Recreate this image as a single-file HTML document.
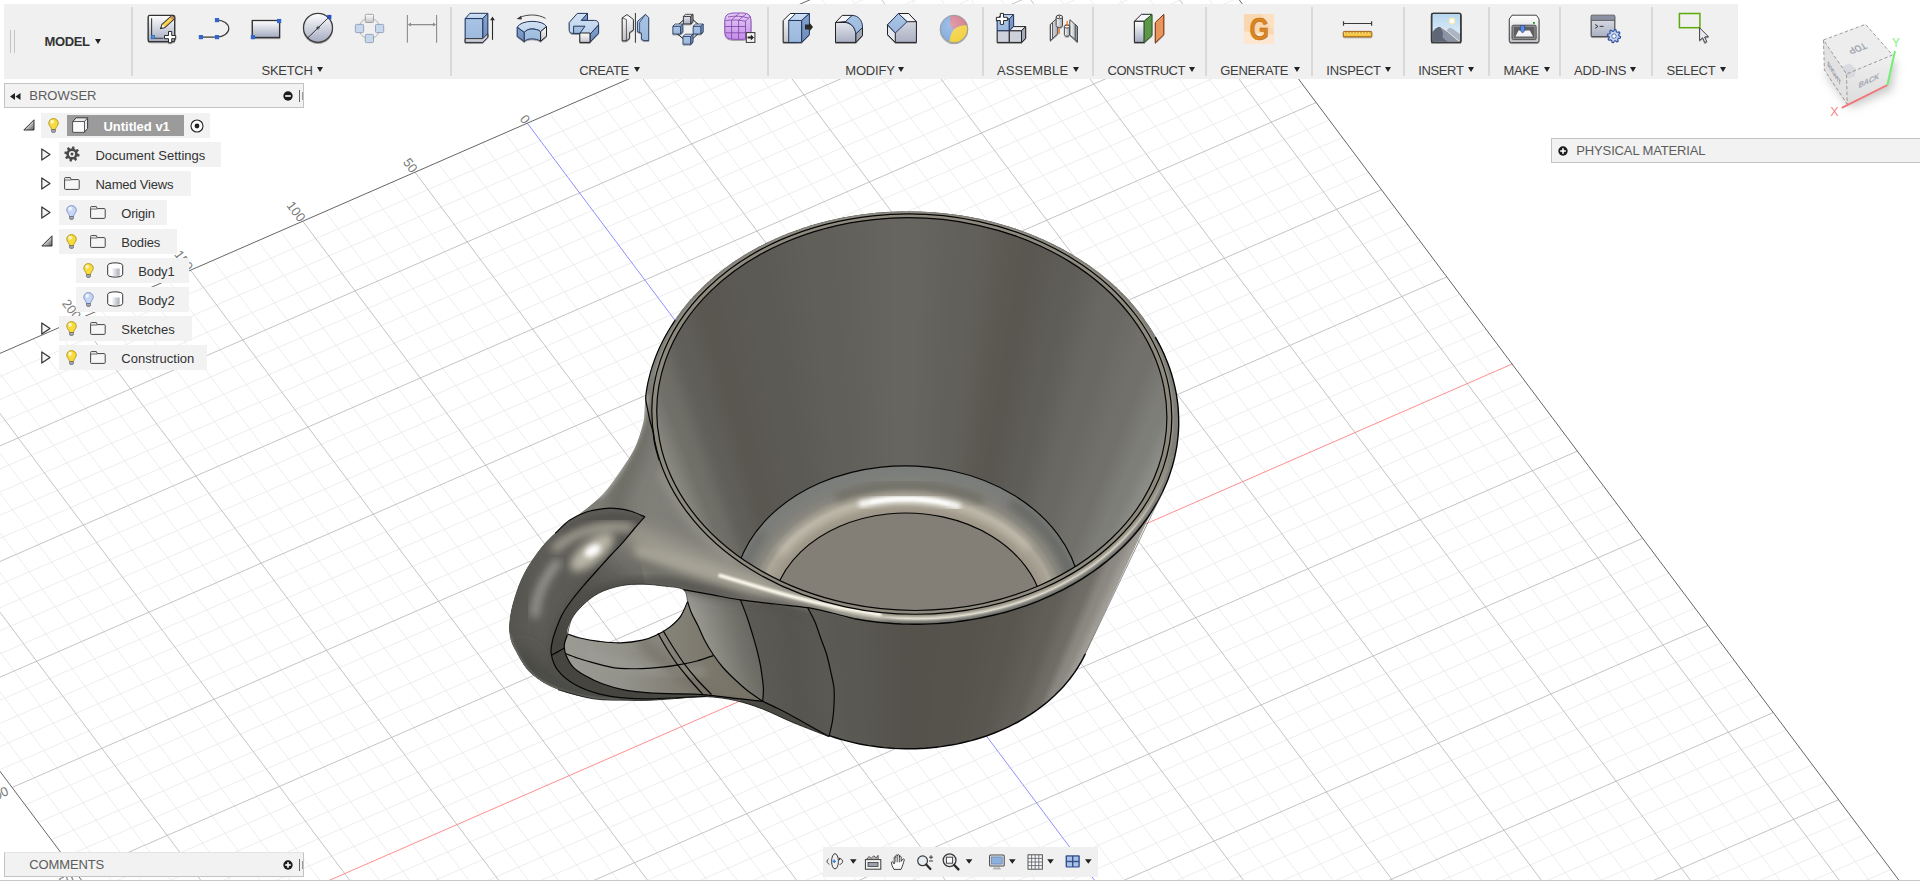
<!DOCTYPE html>
<html lang="en"><head><meta charset="utf-8"><title>Untitled v1 - Model</title>
<style>
html,body{margin:0;padding:0;background:#fff;}
body{width:1920px;height:881px;overflow:hidden;position:relative;font-family:"Liberation Sans",sans-serif;}
#scene{position:absolute;left:0;top:0;}

.tb{position:absolute;left:4px;top:4px;width:1734px;height:74.5px;background:#f0f0f0;}
.sep{position:absolute;top:3px;width:2px;height:69px;background:#d9d9d9;}
.lbl{position:absolute;top:58.9px;font-size:13px;line-height:15px;color:#3c3c3c;white-space:nowrap;}
.arr{position:absolute;width:0;height:0;border-left:3.4px solid transparent;border-right:3.4px solid transparent;border-top:5px solid #222;}
.ico{position:absolute;overflow:visible;}
.model{position:absolute;left:40.5px;top:29.7px;font-size:13px;font-weight:bold;line-height:16px;color:#333;letter-spacing:-0.35px;}
.grip{position:absolute;top:26px;width:1px;height:23px;background:#c4c4c4;}
.panel{position:absolute;background:#f2f2f2;border:1px solid #c3c3c3;box-sizing:border-box;font-size:13px;color:#5c5c5c;}
.panel span{position:absolute;line-height:16px;white-space:nowrap;}
.row{position:absolute;height:24.7px;background:#f2f2f2;}
.row span{position:absolute;font-size:13px;line-height:16px;color:#333;white-space:nowrap;top:5.7px;}
.nav{position:absolute;left:822.5px;top:846.7px;width:275.5px;height:30.3px;background:#f0f0f0;}
.botline{position:absolute;left:0;top:880px;width:1920px;height:1px;background:#c8c8c8;}

</style></head><body>
<svg id="scene" width="1920" height="881" viewBox="0 0 1920 881">
<defs>
<clipPath id="cpOuter"><path d="M657.3,474.3L654.9,468 652.8,461.7 651,455.4 649.4,449 648.1,442.6 647,436.1 646.2,429.7 645.7,423.2 645.4,416.7 645.4,410.3 645.7,403.8 646.2,397.3 647,390.9 648,384.5 649.4,378.1 650.9,371.7 652.8,365.4 654.9,359.2 657.2,353 659.9,346.9 662.7,340.8 665.8,334.8 669.2,328.9 672.8,323.1 676.6,317.4 680.7,311.7 685,306.2 689.5,300.8 694.3,295.5 699.3,290.4 704.5,285.3 709.8,280.4 715.4,275.6 721.2,271 727.2,266.5 733.4,262.1 739.7,257.9 746.2,253.9 752.9,250 759.7,246.3 766.7,242.8 773.8,239.4 781.1,236.3 788.5,233.3 796,230.4 803.7,227.8 811.4,225.3 819.3,223.1 827.2,221 835.2,219.2 843.3,217.5 851.5,216 859.7,214.7 868,213.7 876.3,212.8 884.7,212.1 893.1,211.7 901.5,211.4 909.9,211.4 918.3,211.5 926.7,211.9 935.1,212.4 943.5,213.2 951.8,214.2 960.1,215.3 968.4,216.7 976.6,218.3 984.7,220.1 992.8,222 1000.7,224.2 1008.6,226.5 1016.4,229.1 1024.1,231.8 1031.7,234.7 1039.1,237.8 1046.4,241.1 1053.6,244.5 1060.7,248.1 1067.6,251.9 1074.3,255.9 1080.9,260 1087.3,264.2 1093.6,268.7 1099.6,273.2 1105.5,277.9 1111.2,282.8 1116.7,287.8 1121.9,292.9 1127,298.1 1131.8,303.5 1136.5,308.9 1140.9,314.5 1145,320.2 1149,325.9 1152.7,331.8 1156.1,337.7 1159.4,343.8 1162.3,349.9 1165.1,356 1167.5,362.2 1169.7,368.5 1171.7,374.8 1173.4,381.2 1174.8,387.6 1176,394 1176.9,400.5 1177.5,407 1177.9,413.4 1178,419.9 1177.9,426.4 1177.5,432.9 1176.8,439.3 1175.8,445.7 1174.6,452.1 1173.1,458.5 1171.4,464.8 1169.4,471.1 1167.1,477.3 1164.6,483.5 1161.9,489.5 1085.1,654.2 1082.3,659.8 1079.1,665.4 1075.6,670.8 1071.8,676.1 1067.8,681.3 1063.4,686.4 1058.8,691.3 1054,696.1 1048.8,700.7 1043.5,705.1 1037.8,709.4 1032,713.4 1025.9,717.3 1019.7,721 1013.2,724.4 1006.6,727.7 999.8,730.7 992.8,733.5 985.7,736.1 978.4,738.5 971,740.6 963.5,742.5 955.9,744.1 948.2,745.5 940.4,746.7 932.6,747.6 924.7,748.2 916.8,748.6 908.9,748.8 901,748.6 893,748.3 885.1,747.7 877.3,746.8 869.5,745.7 861.7,744.3 854,742.7 846.5,740.8 839,738.7 831.6,736.4 824.4,733.8 817.2,731 810.3,728 803.5,724.8 796.9,721.3 790.5,717.7 784.3,713.8 778.2,709.8 772.4,705.6 766.9,701.1 761.6,696.6 756.5,691.8 751.7,686.9 747.1,681.9 742.8,676.7 738.8,671.4 735.1,665.9 731.7,660.4 728.6,654.7 725.8,649 723.2,643.2Z"/></clipPath>
<clipPath id="cpIn"><path d="M1132.3,317.8L1138.7,326.9 1144.5,336.2 1149.7,345.8 1154.2,355.5 1158,365.4 1161.2,375.4 1163.6,385.6 1165.4,395.8 1166.5,406 1166.9,416.3 1166.6,426.6 1165.6,436.9 1163.9,447 1161.5,457.1 1158.4,467.1 1154.7,476.9 1150.3,486.6 1145.2,496 1139.5,505.3 1133.1,514.2 1126.2,523 1118.7,531.4 1110.6,539.5 1101.9,547.2 1092.8,554.6 1083.1,561.6 1073,568.2 1062.4,574.3 1051.4,580.1 1040,585.3 1028.3,590.1 1016.3,594.5 1004,598.3 991.4,601.6 978.6,604.4 965.6,606.7 952.5,608.5 939.2,609.7 925.9,610.4 912.6,610.5 899.2,610.1 885.9,609.2 872.6,607.8 859.5,605.8 846.5,603.3 833.7,600.2 821.1,596.7 808.7,592.6 796.6,588.1 784.9,583.1 773.5,577.6 762.4,571.7 751.8,565.3 741.6,558.6 731.9,551.4 722.7,543.9 714,536 705.8,527.8 698.2,519.2 691.2,510.4 684.8,501.3 679,492 673.8,482.4 669.3,472.7 665.5,462.8 662.3,452.8 659.9,442.6 658.1,432.4 657,422.2 656.6,411.9 656.9,401.6 657.9,391.3 659.6,381.2 662,371.1 665.1,361.1 668.8,351.3 673.2,341.6 678.3,332.2 684,322.9 690.4,314 697.3,305.2 704.8,296.8 712.9,288.7 721.6,281 730.7,273.6 740.4,266.6 750.5,260 761.1,253.9 772.1,248.1 783.5,242.9 795.2,238.1 807.2,233.7 819.5,229.9 832.1,226.6 844.9,223.8 857.9,221.5 871,219.7 884.3,218.5 897.6,217.8 910.9,217.7 924.3,218.1 937.6,219 950.9,220.4 964,222.4 977,224.9 989.8,228 1002.4,231.5 1014.8,235.6 1026.9,240.1 1038.6,245.1 1050,250.6 1061.1,256.5 1071.7,262.9 1081.9,269.6 1091.6,276.8 1100.8,284.3 1109.5,292.2 1117.7,300.4 1125.3,309 1132.3,317.8Z"/></clipPath>
<clipPath id="cpE2"><path d="M1136.5,316L1143,325.3 1148.9,334.8 1154.2,344.5 1158.7,354.4 1162.6,364.5 1165.9,374.7 1168.4,385 1170.2,395.4 1171.3,405.9 1171.7,416.4 1171.4,426.8 1170.4,437.3 1168.7,447.7 1166.2,457.9 1163.1,468.1 1159.3,478.1 1154.8,487.9 1149.6,497.6 1143.8,507 1137.3,516.1 1130.2,525 1122.6,533.6 1114.3,541.8 1105.5,549.7 1096.2,557.2 1086.3,564.3 1076,571.1 1065.2,577.3 1054,583.2 1042.5,588.6 1030.5,593.4 1018.3,597.9 1005.7,601.7 992.9,605.1 979.8,608 966.6,610.3 953.2,612.1 939.8,613.4 926.2,614.1 912.6,614.2 899,613.8 885.4,612.9 871.9,611.4 858.5,609.4 845.3,606.8 832.2,603.7 819.4,600.1 806.8,596 794.5,591.4 782.5,586.3 770.9,580.7 759.6,574.7 748.8,568.2 738.4,561.3 728.5,554 719.1,546.3 710.2,538.3 701.9,529.9 694.2,521.2 687,512.2 680.5,502.9 674.6,493.4 669.3,483.7 664.8,473.8 660.9,463.7 657.6,453.5 655.1,443.2 653.3,432.8 652.2,422.3 651.8,411.8 652.1,401.4 653.1,390.9 654.8,380.5 657.3,370.3 660.4,360.1 664.2,350.1 668.7,340.3 673.9,330.6 679.7,321.2 686.2,312.1 693.3,303.2 700.9,294.6 709.2,286.4 718,278.5 727.3,271 737.2,263.9 747.5,257.1 758.3,250.9 769.5,245 781,239.6 793,234.8 805.2,230.3 817.8,226.5 830.6,223.1 843.7,220.2 856.9,217.9 870.3,216.1 883.7,214.8 897.3,214.1 910.9,214 924.5,214.4 938.1,215.3 951.6,216.8 965,218.8 978.2,221.4 991.3,224.5 1004.1,228.1 1016.7,232.2 1029,236.8 1041,241.9 1052.6,247.5 1063.9,253.5 1074.7,260 1085.1,266.9 1095,274.2 1104.4,281.9 1113.3,289.9 1121.6,298.3 1129.3,307 1136.5,316Z"/></clipPath>
<clipPath id="cpF1"><path d="M1057.7,534.1L1062,540.3 1066,546.7 1069.5,553.2 1072.6,559.9 1075.2,566.6 1077.3,573.4 1079,580.3 1080.2,587.3 1081,594.3 1081.3,601.3 1081,608.3 1080.4,615.3 1079.2,622.3 1077.6,629.1 1075.5,635.9 1072.9,642.6 1069.9,649.2 1066.4,655.7 1062.5,662 1058.2,668.1 1053.5,674 1048.4,679.8 1042.8,685.3 1036.9,690.6 1030.7,695.6 1024.1,700.4 1017.2,704.9 1010,709.1 1002.5,713 994.7,716.6 986.7,719.8 978.5,722.8 970.1,725.4 961.6,727.7 952.8,729.6 944,731.1 935,732.3 926,733.2 916.9,733.6 907.8,733.8 898.7,733.5 889.6,732.9 880.6,731.9 871.6,730.5 862.8,728.8 854,726.7 845.4,724.3 837,721.6 828.8,718.5 820.7,715 812.9,711.3 805.4,707.3 798.2,702.9 791.2,698.3 784.6,693.4 778.3,688.3 772.4,682.9 766.8,677.3 761.6,671.5 756.8,665.5 752.5,659.3 748.5,652.9 745,646.4 741.9,639.7 739.3,633 737.2,626.2 735.5,619.3 734.3,612.3 733.5,605.3 733.2,598.3 733.5,591.3 734.1,584.3 735.3,577.3 736.9,570.5 739,563.7 741.6,557 744.6,550.4 748.1,543.9 752,537.6 756.3,531.5 761,525.6 766.1,519.8 771.7,514.3 777.6,509 783.8,504 790.4,499.2 797.3,494.7 804.5,490.5 812,486.6 819.8,483 827.8,479.8 836,476.8 844.4,474.2 852.9,471.9 861.7,470 870.5,468.5 879.5,467.3 888.5,466.4 897.6,466 906.7,465.8 915.8,466.1 924.9,466.7 933.9,467.7 942.9,469.1 951.7,470.8 960.5,472.9 969.1,475.3 977.5,478 985.7,481.1 993.8,484.6 1001.6,488.3 1009.1,492.3 1016.3,496.7 1023.3,501.3 1029.9,506.2 1036.2,511.3 1042.1,516.7 1047.7,522.3 1052.9,528.1 1057.7,534.1Z"/></clipPath>
<filter id="b1" x="-30%" y="-30%" width="160%" height="160%"><feGaussianBlur stdDeviation="1.2"/></filter>
<filter id="b2" x="-30%" y="-30%" width="160%" height="160%"><feGaussianBlur stdDeviation="2.5"/></filter>
<filter id="b4" x="-30%" y="-30%" width="160%" height="160%"><feGaussianBlur stdDeviation="4.5"/></filter>
<filter id="b8" x="-40%" y="-40%" width="180%" height="180%"><feGaussianBlur stdDeviation="9"/></filter>
<filter id="b14" x="-50%" y="-50%" width="200%" height="200%"><feGaussianBlur stdDeviation="15"/></filter>
<linearGradient id="gFloor" gradientUnits="userSpaceOnUse" x1="780" y1="520" x2="1040" y2="620"><stop offset="0" stop-color="#837f76"/><stop offset="0.5" stop-color="#827e75"/><stop offset="1" stop-color="#807c73"/></linearGradient>
<linearGradient id="gMF" gradientUnits="userSpaceOnUse" x1="0" y1="450" x2="0" y2="545"><stop offset="0" stop-color="#000"/><stop offset="1" stop-color="#fff"/></linearGradient>
<mask id="mFront" maskUnits="userSpaceOnUse" x="600" y="200" width="650" height="450"><rect x="600" y="200" width="650" height="450" fill="url(#gMF)"/></mask>
<linearGradient id="gStreak" gradientUnits="userSpaceOnUse" x1="760" y1="0" x2="1110" y2="0"><stop offset="0" stop-color="#f6f2e2" stop-opacity="0.95"/><stop offset="0.35" stop-color="#f2eee0" stop-opacity="0.6"/><stop offset="0.7" stop-color="#eeeade" stop-opacity="0.3"/><stop offset="1" stop-color="#eeeade" stop-opacity="0"/></linearGradient>
<clipPath id="cpH"><path clip-rule="evenodd" d="M651.5,372C650.8,373.8 648.4,379.8 647.5,383C646.6,386.2 646.5,387.4 646.1,391.4C645.7,395.4 645.7,401.8 645.2,407C644.7,412.2 645,415.8 643.3,422.6C641.6,429.5 638.6,440.1 634.8,448.1C631,456.1 625.8,463.2 620.6,470.8C615.4,478.4 609.6,486.9 603.5,493.5C597.4,500.1 590.8,504.9 583.7,510.6C576.6,516.3 568.1,521.5 561,527.6C553.9,533.8 547.2,539.9 541.1,547.5C535,555.1 528.6,564.5 524.1,573C519.6,581.5 516.5,590.8 514.1,598.6C511.7,606.4 510.2,613.9 509.5,620C508.8,626.1 508.8,630.2 509.6,635C510.4,639.8 511,642.5 514.5,648.9C518,655.3 523.5,666.6 530.8,673.4C538.1,680.2 547.6,685.6 558.1,689.8C568.6,694 582.1,697.1 593.5,698.8C604.9,700.5 616.8,700 626.2,700.2C635.6,700.4 641.9,700.5 650,700.2C658.1,699.9 665.3,699.2 674.6,698.6C683.9,698 695.9,696.3 706,696.6C716.1,696.9 726,698.4 735.4,700.5C744.8,702.6 753,705.3 762.6,709C772.2,712.7 782.1,718 793.2,722.6C804.3,727.2 823,734.3 829,736.6L829,736.6C829.6,733.8 831.8,725.7 832.6,720C833.5,714.3 833.9,707.5 834.1,702.2C834.3,696.9 834.6,693.1 834,688C833.4,682.9 832,677.2 830.7,671.5C829.5,665.8 828.2,659.7 826.5,654C824.8,648.3 822.4,642.8 820.5,637.5C818.6,632.2 817.1,627 815,622C812.9,617 808.9,610.1 807.7,607.7L832,613 854.6,618.9 L861.3,620.8 871.7,622.3 882.1,623.4 892.6,624.3 903.1,624.8 913.6,625 924.2,624.9 934.7,624.5 945.1,623.8 955.6,622.7 965.9,621.3 976.2,619.7 986.3,617.7L930,600 L860,590 L812,575 L770,550 L730,515 L700,470 L678,425 L664,385Z M567.6,634C566.2,630.8 569.2,623.8 571.7,619C574.2,614.2 578.1,609.7 582.6,605.4C587.1,601.1 592.5,596.4 598.9,593.1C605.2,589.8 613.4,587.3 620.7,585.8C628,584.3 635.2,584.2 642.5,584.2C649.8,584.2 657.5,585.2 664.3,586.1C671.1,587 679.5,587 683.4,589.6C687.3,592.2 688.1,597 687.6,601.5C687.1,606 683.6,612 680.6,616.3C677.6,620.6 673.8,623.9 669.7,627.1C665.6,630.3 660.6,633.1 656.1,635.3C651.6,637.5 648.4,638.9 642.5,640.2C636.6,641.5 628,642.7 620.7,642.9C613.4,643.1 605.7,642.1 598.9,641.3C592.1,640.5 585.1,639.2 579.9,638C574.7,636.8 569,637.2 567.6,634Z"/></clipPath>
<clipPath id="cpRA"><path d="M555.3,533.3C557.7,531.1 564.3,523.8 569.5,520.2C574.7,516.7 580.8,513.9 586.5,512C592.2,510.1 598.3,509.2 603.5,508.6C608.7,508 613,508.1 617.7,508.6C622.5,509.1 627.5,510.1 632,511.5C636.5,512.9 642.6,515.9 644.7,516.8L644.7,516.8C642.9,518.8 637.5,524.8 634,529C630.5,533.2 627.2,537.5 623.4,541.8C619.6,546.1 615.2,550.5 611,555C606.8,559.5 602.7,564.2 598.4,569C594.1,573.8 589.2,579.1 585,584C580.8,588.9 576.8,593.5 573,598.5C569.2,603.5 565.2,609.1 562.5,614C559.8,618.9 558.2,623.5 556.5,628C554.8,632.5 553.3,636.6 552.4,641C551.5,645.4 550.3,649.4 551.3,654.4C552.2,659.4 554.2,665.7 558.1,670.7C562,675.7 567.6,680.4 574.4,684.3C581.2,688.2 590.3,691.6 598.9,693.9C607.5,696.2 617.7,697.4 626.2,698.2C634.7,699 641,698.9 650,698.8C659,698.7 670.7,698 680,697.6C689.3,697.2 701.7,696.6 706,696.4L706,696.6C700.8,696.9 683.9,698 674.6,698.6C665.3,699.2 658.1,699.9 650,700.2C641.9,700.5 635.6,700.4 626.2,700.2C616.8,700 604.9,700.5 593.5,698.8C582.1,697.1 568.6,694 558.1,689.8C547.6,685.6 538.1,680.2 530.8,673.4C523.5,666.6 518,655.3 514.5,648.9C511,642.5 510.4,639.8 509.6,635C508.8,630.2 508.8,626.1 509.5,620C510.2,613.9 511.7,606.4 514.1,598.6C516.5,590.8 519.6,581.5 524.1,573C528.6,564.5 535,555.1 541.1,547.5C547.2,539.9 557.7,530.9 561,527.6Z"/></clipPath>
<clipPath id="cpRC"><path d="M567.6,634C569.6,634.7 574.7,636.8 579.9,638C585.1,639.2 592.1,640.5 598.9,641.3C605.7,642.1 613.4,643.1 620.7,642.9C628,642.7 636.6,641.5 642.5,640.2C648.4,638.9 651.6,637.5 656.1,635.3C660.6,633.1 665.6,630.3 669.7,627.1C673.8,623.9 677.6,620.6 680.6,616.3C683.6,612 686.4,604 687.6,601.5L687.6,601.5C688.2,603.4 689.8,609 691.5,613C693.2,617 695.7,621 697.9,625.5C700.1,630 702,635.2 704.5,640C707,644.8 710.1,649.9 713.2,654.5C716.3,659.1 719.3,663.2 723,667.5C726.7,671.8 731.2,676.1 735.4,680C739.6,683.9 743.5,687.5 748,691C752.5,694.5 760.2,699.6 762.6,701.3L762.6,701.3C758,700.8 745.1,699.4 735,698.3C724.9,697.2 712.1,695.4 702,694.6C691.9,693.9 682.7,694 674.6,693.8C666.5,693.6 661.8,693.8 653.5,693.2C645.2,692.6 633.6,691.8 625.1,690.2C616.6,688.6 609,686.2 602.4,683.8C595.8,681.4 590.3,678.6 585.4,675.8C580.5,673 576.1,670.2 572.9,666.8C569.7,663.4 567.5,658.5 566.1,655.4C564.7,652.3 564.6,650.1 564.4,648C564.1,645.9 564.1,645.2 564.6,643C565.1,640.8 566.9,636.3 567.4,635Z"/></clipPath>
<clipPath id="cpRE"><path d="M687.6,601.5C688.2,603.4 689.8,609 691.5,613C693.2,617 695.7,621 697.9,625.5C700.1,630 702,635.2 704.5,640C707,644.8 710.1,649.9 713.2,654.5C716.3,659.1 719.3,663.2 723,667.5C726.7,671.8 731.2,676.1 735.4,680C739.6,683.9 743.5,687.5 748,691C752.5,694.5 760.2,699.6 762.6,701.3L762.6,701.3C762.7,699.2 763.7,694 763.4,688.5C763.1,683 761.9,674.4 760.9,668.1C759.9,661.9 758.6,656.7 757.2,651C755.8,645.3 754.1,639.7 752.4,634C750.7,628.3 749,622.7 747,617C745,611.3 741.6,602.8 740.5,599.9L740.5,599.9C735.4,599 719.5,596.1 710,594.4C700.5,592.7 687.8,590.4 683.4,589.6Z"/></clipPath>
<clipPath id="cpRF"><path d="M740.5,599.9C741.6,602.8 745,611.3 747,617C749,622.7 750.7,628.3 752.4,634C754.1,639.7 755.8,645.3 757.2,651C758.6,656.7 759.9,661.9 760.9,668.1C761.9,674.4 763.1,683 763.4,688.5C763.7,694 762.7,699.2 762.6,701.3L762.6,701.3C765.2,702.5 772.9,706 778,708.5C783.1,711 787.7,713.5 793.2,716.5C798.7,719.5 805,723.1 811,726.5C817,729.9 826,734.9 829,736.6L829,736.6C829.6,733.8 831.8,725.7 832.6,720C833.5,714.3 833.9,707.5 834.1,702.2C834.3,696.9 834.6,693.1 834,688C833.4,682.9 832,677.2 830.7,671.5C829.5,665.8 828.2,659.7 826.5,654C824.8,648.3 822.4,642.8 820.5,637.5C818.6,632.2 817.1,627 815,622C812.9,617 808.9,610.1 807.7,607.7L807.7,607.7C802.2,607.1 786.2,605.3 775,604C763.8,602.7 746.2,600.6 740.5,599.9Z"/></clipPath>
<linearGradient id="gRE" gradientUnits="userSpaceOnUse" x1="692" y1="640" x2="762" y2="620"><stop offset="0" stop-color="#a3a29b"/><stop offset="0.25" stop-color="#8e8d86"/><stop offset="0.6" stop-color="#74736c"/><stop offset="1" stop-color="#605e58"/></linearGradient>
<linearGradient id="gRF" gradientUnits="userSpaceOnUse" x1="750" y1="650" x2="835" y2="640"><stop offset="0" stop-color="#5d5b55"/><stop offset="0.5" stop-color="#575550"/><stop offset="1" stop-color="#5b5a54"/></linearGradient>
<linearGradient id="gRC" gradientUnits="userSpaceOnUse" x1="570" y1="660" x2="740" y2="660"><stop offset="0" stop-color="#9a9a93"/><stop offset="0.3" stop-color="#94938b"/><stop offset="0.55" stop-color="#86847a"/><stop offset="0.8" stop-color="#7c786c"/><stop offset="1" stop-color="#777367"/></linearGradient>
<linearGradient id="gBody" gradientUnits="userSpaceOnUse" x1="790" y1="0" x2="905" y2="0"><stop offset="0" stop-color="#807f78"/><stop offset="1" stop-color="#807f78" stop-opacity="0"/></linearGradient>
<linearGradient id="gBand" gradientUnits="userSpaceOnUse" x1="632" y1="540" x2="560" y2="640"><stop offset="0" stop-color="#6a6963" stop-opacity="0"/><stop offset="0.3" stop-color="#5c5b55" stop-opacity="0.85"/><stop offset="0.6" stop-color="#504f4a"/><stop offset="1" stop-color="#464540"/></linearGradient>
</defs>
<g id="grid" fill="none" stroke-width="0.85">
<path stroke="#eaeaea" d="M-213.6,446.6L844.1,1858.2M-191.1,436.8L866.6,1848.4M-168.7,427L889,1838.6M-123.8,407.4L933.9,1819M-101.3,397.6L956.4,1809.2M-78.9,387.8L978.8,1799.4M-56.4,378L1001.3,1789.6M-11.5,358.4L1046.2,1770M10.9,348.6L1068.6,1760.2M33.4,338.8L1091.1,1750.4M55.8,329L1113.5,1740.6M100.7,309.4L1158.4,1721M123.2,299.6L1180.9,1711.2M145.6,289.8L1203.3,1701.4M168.1,280L1225.8,1691.6M213,260.4L1270.7,1672M235.4,250.6L1293.1,1662.2M257.9,240.8L1315.6,1652.4M280.3,231L1338,1642.6M325.2,211.4L1382.9,1623M347.7,201.6L1405.4,1613.2M370.1,191.8L1427.8,1603.4M392.6,182L1450.3,1593.6M437.5,162.4L1495.2,1574M459.9,152.6L1517.6,1564.2M482.4,142.8L1540.1,1554.4M504.8,133L1562.5,1544.6M549.7,113.4L1607.4,1525M572.2,103.6L1629.9,1515.2M594.6,93.8L1652.3,1505.4M617.1,84L1674.8,1495.6M662,64.4L1719.7,1476M684.4,54.6L1742.1,1466.2M706.9,44.8L1764.6,1456.4M729.3,35L1787,1446.6M774.2,15.4L1831.9,1427M796.7,5.6L1854.4,1417.2M819.1,-4.2L1876.8,1407.4M841.6,-14L1899.3,1397.6M886.5,-33.6L1944.2,1378M908.9,-43.4L1966.6,1368.2M931.4,-53.2L1989.1,1358.4M953.8,-63L2011.5,1348.6M998.7,-82.6L2056.4,1329M1021.2,-92.4L2078.9,1319.2M1043.6,-102.2L2101.3,1309.4M1066.1,-112L2123.8,1299.6M1111,-131.6L2168.7,1280M-223,473.8L1146.5,-124M-209.9,491.2L1159.5,-106.5M-196.8,508.7L1172.6,-89.1M-170.7,543.5L1198.7,-54.3M-157.7,560.9L1211.8,-36.8M-144.6,578.4L1224.8,-19.4M-131.6,595.8L1237.9,-2M-105.4,630.6L1264,32.9M-92.4,648.1L1277.1,50.3M-79.3,665.5L1290.1,67.7M-66.3,682.9L1303.2,85.2M-40.2,717.8L1329.3,120M-27.1,735.2L1342.4,137.4M-14,752.6L1355.4,154.9M-1,770.1L1368.5,172.3M25.1,804.9L1394.6,207.2M38.2,822.4L1407.6,224.6M51.3,839.8L1420.7,242M64.3,857.2L1433.8,259.4M90.4,892.1L1459.9,294.3M103.5,909.5L1472.9,311.7M116.5,926.9L1486,329.1M129.6,944.3L1499.1,346.6M155.7,979.2L1525.2,381.4M168.8,996.6L1538.2,398.9M181.8,1014.1L1551.3,416.3M194.9,1031.5L1564.3,433.7M221,1066.3L1590.5,468.6M234.1,1083.8L1603.5,486M247.1,1101.2L1616.6,503.4M260.2,1118.6L1629.6,520.9M286.3,1153.5L1655.7,555.7M299.4,1170.9L1668.8,573.1M312.4,1188.3L1681.9,590.6M325.5,1205.8L1694.9,608M351.6,1240.6L1721,642.8M364.6,1258L1734.1,660.3M377.7,1275.5L1747.2,677.7M390.8,1292.9L1760.2,695.1M416.9,1327.8L1786.3,730M429.9,1345.2L1799.4,747.4M443,1362.6L1812.4,764.8M456.1,1380L1825.5,782.3M482.2,1414.9L1851.6,817.1M495.2,1432.3L1864.7,834.6M508.3,1449.8L1877.7,852M521.3,1467.2L1890.8,869.4M547.5,1502L1916.9,904.3M560.5,1519.5L1930,921.7M573.6,1536.9L1943,939.1M586.6,1554.3L1956.1,956.5M612.7,1589.2L1982.2,991.4M625.8,1606.6L1995.3,1008.8M638.9,1624L2008.3,1026.3M651.9,1641.5L2021.4,1043.7M678,1676.3L2047.5,1078.5M691.1,1693.7L2060.5,1096M704.2,1711.2L2073.6,1113.4M717.2,1728.6L2086.7,1130.8M743.3,1763.5L2112.8,1165.7M756.4,1780.9L2125.8,1183.1M769.4,1798.3L2138.9,1200.5M782.5,1815.7L2152,1218M808.6,1850.6L2178.1,1252.8M821.7,1868L2191.1,1270.2"/>
<path stroke="#b9b9b9" d="M-146.2,417.2L911.5,1828.8M-34,368.2L1023.7,1779.8M78.3,319.2L1136,1730.8M190.5,270.2L1248.2,1681.8M302.8,221.2L1360.5,1632.8M415,172.2L1472.7,1583.8M639.5,74.2L1697.2,1485.8M751.8,25.2L1809.5,1436.8M864,-23.8L1921.7,1387.8M976.3,-72.8L2034,1338.8M1088.5,-121.8L2146.2,1289.8M-183.8,526.1L1185.7,-71.7M-118.5,613.2L1251,15.4M-53.2,700.4L1316.2,102.6M12.1,787.5L1381.5,189.7M77.4,874.6L1446.8,276.9M207.9,1048.9L1577.4,451.1M273.2,1136.1L1642.7,538.3M338.5,1223.2L1708,625.4M403.8,1310.3L1773.3,712.6M469.1,1397.5L1838.6,799.7M534.4,1484.6L1903.9,886.8M599.7,1571.7L1969.1,974M665,1658.9L2034.4,1061.1M730.3,1746L2099.7,1148.3M795.6,1833.2L2165,1235.4"/>
<path stroke="#ff7a7a" d="M142.7,961.8L1512.1,364"/>
<path stroke="#7a7aff" d="M527.3,123.2L1585,1534.8"/>
<path stroke="#4a4a4a" d="M821.7,1868L-236,456.4L1133.4,-141.4L2191.1,1270.2"/>
</g>
<g font-family="Liberation Sans, sans-serif" font-size="13" fill="#7a7a7a">
<text transform="translate(527.3,123.2) rotate(53.2)" text-anchor="end" x="-1" y="4">0</text>
<text transform="translate(415,172.2) rotate(53.2)" text-anchor="end" x="-1" y="4">50</text>
<text transform="translate(302.8,221.2) rotate(53.2)" text-anchor="end" x="-1" y="4">100</text>
<text transform="translate(190.5,270.2) rotate(53.2)" text-anchor="end" x="-1" y="4">150</text>
<text transform="translate(78.3,319.2) rotate(53.2)" text-anchor="end" x="-1" y="4">200</text>
<text transform="translate(12.1,795.5) rotate(-23.6)" text-anchor="end" x="-2" y="-2">100</text>
<text transform="translate(77.4,882.6) rotate(-23.6)" text-anchor="end" x="-2" y="-2">50</text>
<text transform="translate(142.7,969.8) rotate(-23.6)" text-anchor="end" x="-2" y="-2">0</text>
<text transform="translate(207.9,1056.9) rotate(-23.6)" text-anchor="end" x="-2" y="-2">50</text>
<text transform="translate(273.2,1144.1) rotate(-23.6)" text-anchor="end" x="-2" y="-2">100</text>
</g>
<g id="cup">
<g clip-path="url(#cpOuter)" shape-rendering="crispEdges">
<path fill="#706f69" d="M751.1,854.1L387.6,315.2 391.4,312.7 752.1,853.4Z"/><path fill="#706f69" d="M752,853.5L390.9,313 394.6,310.5 753,852.8Z"/><path fill="#706f69" d="M752.9,852.9L394.1,310.8 397.9,308.3 754,852.2Z"/><path fill="#706f69" d="M753.8,852.3L397.4,308.7 401.2,306.2 754.9,851.6Z"/><path fill="#706f69" d="M754.7,851.7L400.7,306.5 404.5,304.1 755.8,851Z"/><path fill="#706f69" d="M755.6,851.1L404,304.4 407.8,302 756.7,850.4Z"/><path fill="#706f69" d="M756.6,850.5L407.3,302.3 411.1,299.9 757.6,849.8Z"/><path fill="#706f69" d="M757.5,849.9L410.6,300.2 414.5,297.8 758.5,849.2Z"/><path fill="#706f69" d="M758.4,849.3L414,298.1 417.8,295.7 759.5,848.7Z"/><path fill="#706f69" d="M759.3,848.7L417.3,296 421.1,293.6 760.4,848.1Z"/><path fill="#706f69" d="M760.3,848.2L420.6,293.9 424.5,291.6 761.3,847.5Z"/><path fill="#706f69" d="M761.2,847.6L424,291.9 427.9,289.6 762.3,846.9Z"/><path fill="#706f69" d="M762.1,847L427.4,289.9 431.2,287.6 763.2,846.4Z"/><path fill="#706f69" d="M763.1,846.5L430.7,287.9 434.6,285.6 764.1,845.8Z"/><path fill="#706f69" d="M764,845.9L434.1,285.9 438,283.6 765.1,845.3Z"/><path fill="#706f69" d="M764.9,845.4L437.5,283.9 441.4,281.6 766,844.7Z"/><path fill="#706f69" d="M765.9,844.8L440.9,281.9 444.8,279.7 767,844.2Z"/><path fill="#706f69" d="M766.8,844.3L444.3,279.9 448.2,277.7 767.9,843.7Z"/><path fill="#706f69" d="M767.8,843.7L447.7,278 451.6,275.8 768.9,843.1Z"/><path fill="#706f69" d="M768.7,843.2L451.1,276.1 455.1,273.9 769.8,842.6Z"/><path fill="#706f69" d="M769.7,842.7L454.6,274.2 458.5,272 770.8,842.1Z"/><path fill="#6f6e68" d="M770.6,842.1L458,272.3 462,270.1 771.7,841.5Z"/><path fill="#6f6e68" d="M771.6,841.6L461.4,270.4 465.4,268.2 772.7,841Z"/><path fill="#6f6e68" d="M772.6,841.1L464.9,268.5 468.9,266.4 773.7,840.5Z"/><path fill="#6f6e68" d="M773.5,840.6L468.4,266.7 472.4,264.6 774.6,840Z"/><path fill="#6e6d67" d="M774.5,840.1L471.8,264.8 475.8,262.7 775.6,839.5Z"/><path fill="#6e6d67" d="M775.5,839.6L475.3,263 479.3,260.9 776.6,839Z"/><path fill="#6e6d67" d="M776.4,839.1L478.8,261.2 482.8,259.2 777.5,838.5Z"/><path fill="#6d6c66" d="M777.4,838.6L482.3,259.4 486.3,257.4 778.5,838Z"/><path fill="#6d6c66" d="M778.4,838.1L485.8,257.6 489.8,255.6 779.5,837.5Z"/><path fill="#6d6c66" d="M779.3,837.6L489.3,255.9 493.4,253.9 780.5,837Z"/><path fill="#6c6b65" d="M780.3,837.1L492.8,254.1 496.9,252.2 781.4,836.6Z"/><path fill="#6c6b65" d="M781.3,836.6L496.4,252.4 500.4,250.4 782.4,836.1Z"/><path fill="#6b6a64" d="M782.3,836.2L499.9,250.7 504,248.7 783.4,835.6Z"/><path fill="#6b6a64" d="M783.3,835.7L503.4,249 507.5,247.1 784.4,835.1Z"/><path fill="#6b6a64" d="M784.2,835.2L507,247.3 511.1,245.4 785.4,834.7Z"/><path fill="#6a6963" d="M785.2,834.7L510.5,245.6 514.6,243.7 786.4,834.2Z"/><path fill="#6a6963" d="M786.2,834.3L514.1,244 518.2,242.1 787.4,833.8Z"/><path fill="#6a6963" d="M787.2,833.8L517.7,242.4 521.8,240.5 788.4,833.3Z"/><path fill="#696862" d="M788.2,833.4L521.2,240.7 525.4,238.9 789.4,832.9Z"/><path fill="#696862" d="M789.2,832.9L524.8,239.1 529,237.3 790.4,832.4Z"/><path fill="#696862" d="M790.2,832.5L528.4,237.5 532.6,235.7 791.4,832Z"/><path fill="#696862" d="M791.2,832.1L532,236 536.2,234.2 792.4,831.6Z"/><path fill="#686761" d="M792.2,831.6L535.6,234.4 539.8,232.6 793.4,831.1Z"/><path fill="#686761" d="M793.2,831.2L539.2,232.9 543.4,231.1 794.4,830.7Z"/><path fill="#686761" d="M794.2,830.8L542.8,231.3 547,229.6 795.4,830.3Z"/><path fill="#686761" d="M795.2,830.4L546.5,229.8 550.7,228.1 796.4,829.9Z"/><path fill="#686761" d="M796.2,829.9L550.1,228.3 554.3,226.6 797.4,829.5Z"/><path fill="#686761" d="M797.2,829.5L553.7,226.9 557.9,225.2 798.4,829.1Z"/><path fill="#686761" d="M798.3,829.1L557.4,225.4 561.6,223.7 799.4,828.7Z"/><path fill="#686761" d="M799.3,828.7L561,223.9 565.2,222.3 800.4,828.3Z"/><path fill="#686761" d="M800.3,828.3L564.7,222.5 568.9,220.9 801.5,827.9Z"/><path fill="#686761" d="M801.3,827.9L568.4,221.1 572.6,219.5 802.5,827.5Z"/><path fill="#686761" d="M802.3,827.5L572,219.7 576.3,218.1 803.5,827.1Z"/><path fill="#676660" d="M803.3,827.2L575.7,218.3 579.9,216.7 804.5,826.7Z"/><path fill="#676660" d="M804.4,826.8L579.4,217 583.6,215.4 805.5,826.3Z"/><path fill="#676660" d="M805.4,826.4L583.1,215.6 587.3,214.1 806.6,826Z"/><path fill="#676660" d="M806.4,826L586.8,214.3 591,212.8 807.6,825.6Z"/><path fill="#66655f" d="M807.4,825.7L590.5,212.9 594.7,211.5 808.6,825.2Z"/><path fill="#66655f" d="M808.5,825.3L594.2,211.6 598.4,210.2 809.7,824.9Z"/><path fill="#66655f" d="M809.5,824.9L597.9,210.4 602.2,208.9 810.7,824.5Z"/><path fill="#65645e" d="M810.5,824.6L601.6,209.1 605.9,207.6 811.7,824.2Z"/><path fill="#65645e" d="M811.6,824.2L605.3,207.8 609.6,206.4 812.8,823.8Z"/><path fill="#65645e" d="M812.6,823.9L609,206.6 613.3,205.2 813.8,823.5Z"/><path fill="#64635d" d="M813.6,823.6L612.8,205.4 617.1,204 814.8,823.2Z"/><path fill="#64635d" d="M814.7,823.2L616.5,204.2 620.8,202.8 815.9,822.8Z"/><path fill="#64635d" d="M815.7,822.9L620.3,203 624.6,201.6 816.9,822.5Z"/><path fill="#63625c" d="M816.8,822.6L624,201.8 628.3,200.5 818,822.2Z"/><path fill="#63625c" d="M817.8,822.2L627.8,200.7 632.1,199.3 819,821.9Z"/><path fill="#63625c" d="M818.8,821.9L631.5,199.5 635.8,198.2 820,821.6Z"/><path fill="#62615b" d="M819.9,821.6L635.3,198.4 639.6,197.1 821.1,821.3Z"/><path fill="#62615b" d="M820.9,821.3L639,197.3 643.4,196 822.1,821Z"/><path fill="#62615b" d="M822,821L642.8,196.2 647.2,195 823.2,820.7Z"/><path fill="#62615b" d="M823,820.7L646.6,195.1 650.9,193.9 824.2,820.4Z"/><path fill="#61605a" d="M824.1,820.4L650.4,194.1 654.7,192.9 825.3,820.1Z"/><path fill="#61605a" d="M825.1,820.1L654.2,193 658.5,191.8 826.3,819.8Z"/><path fill="#61605a" d="M826.2,819.8L658,192 662.3,190.8 827.4,819.5Z"/><path fill="#61605a" d="M827.2,819.6L661.7,191 666.1,189.8 828.5,819.2Z"/><path fill="#61605a" d="M828.3,819.3L665.5,190 669.9,188.9 829.5,819Z"/><path fill="#61605a" d="M829.4,819L669.4,189 673.7,187.9 830.6,818.7Z"/><path fill="#61605a" d="M830.4,818.8L673.2,188.1 677.5,187 831.6,818.5Z"/><path fill="#61605a" d="M831.5,818.5L677,187.1 681.4,186.1 832.7,818.2Z"/><path fill="#61605a" d="M832.5,818.2L680.8,186.2 685.2,185.1 833.7,817.9Z"/><path fill="#61605a" d="M833.6,818L684.6,185.3 689,184.3 834.8,817.7Z"/><path fill="#61605a" d="M834.7,817.7L688.4,184.4 692.8,183.4 835.9,817.5Z"/><path fill="#615f59" d="M835.7,817.5L692.3,183.5 696.7,182.5 836.9,817.2Z"/><path fill="#605f59" d="M836.8,817.3L696.1,182.7 700.5,181.7 838,817Z"/><path fill="#605f59" d="M837.8,817L699.9,181.8 704.3,180.9 839.1,816.8Z"/><path fill="#605f59" d="M838.9,816.8L703.8,181 708.2,180.1 840.1,816.5Z"/><path fill="#605e58" d="M840,816.6L707.6,180.2 712,179.3 841.2,816.3Z"/><path fill="#5f5e58" d="M841,816.3L711.5,179.4 715.9,178.5 842.3,816.1Z"/><path fill="#5f5e58" d="M842.1,816.1L715.3,178.6 719.7,177.7 843.3,815.9Z"/><path fill="#5f5d57" d="M843.2,815.9L719.2,177.9 723.6,177 844.4,815.7Z"/><path fill="#5e5d57" d="M844.3,815.7L723,177.1 727.5,176.3 845.5,815.5Z"/><path fill="#5e5d57" d="M845.3,815.5L726.9,176.4 731.3,175.6 846.6,815.3Z"/><path fill="#5e5c56" d="M846.4,815.3L730.7,175.7 735.2,174.9 847.6,815.1Z"/><path fill="#5d5c56" d="M847.5,815.1L734.6,175 739.1,174.2 848.7,814.9Z"/><path fill="#5d5b55" d="M848.6,814.9L738.5,174.3 742.9,173.6 849.8,814.7Z"/><path fill="#5d5b55" d="M849.6,814.8L742.3,173.7 746.8,172.9 850.9,814.5Z"/><path fill="#5c5b55" d="M850.7,814.6L746.2,173 750.7,172.3 851.9,814.4Z"/><path fill="#5c5a54" d="M851.8,814.4L750.1,172.4 754.6,171.7 853,814.2Z"/><path fill="#5c5a54" d="M852.9,814.2L754,171.8 758.4,171.1 854.1,814Z"/><path fill="#5b5a54" d="M853.9,814.1L757.9,171.2 762.3,170.6 855.2,813.9Z"/><path fill="#5b5953" d="M855,813.9L761.7,170.6 766.2,170 856.3,813.7Z"/><path fill="#5b5953" d="M856.1,813.8L765.6,170.1 770.1,169.5 857.3,813.6Z"/><path fill="#5b5953" d="M857.2,813.6L769.5,169.5 774,168.9 858.4,813.4Z"/><path fill="#5a5953" d="M858.3,813.5L773.4,169 777.9,168.4 859.5,813.3Z"/><path fill="#5a5852" d="M859.3,813.3L777.3,168.5 781.8,168 860.6,813.2Z"/><path fill="#5a5852" d="M860.4,813.2L781.2,168 785.7,167.5 861.7,813Z"/><path fill="#5a5852" d="M861.5,813.1L785.1,167.6 789.6,167 862.8,812.9Z"/><path fill="#5a5852" d="M862.6,812.9L789,167.1 793.5,166.6 863.8,812.8Z"/><path fill="#5a5852" d="M863.7,812.8L792.9,166.7 797.4,166.2 864.9,812.7Z"/><path fill="#5a5852" d="M864.8,812.7L796.8,166.3 801.3,165.8 866,812.6Z"/><path fill="#5a5852" d="M865.8,812.6L800.7,165.9 805.2,165.4 867.1,812.5Z"/><path fill="#5a5852" d="M866.9,812.5L804.6,165.5 809.1,165 868.2,812.4Z"/><path fill="#5a5852" d="M868,812.4L808.5,165.1 813,164.7 869.3,812.3Z"/><path fill="#5a5852" d="M869.1,812.3L812.4,164.7 816.9,164.4 870.4,812.2Z"/><path fill="#5a5852" d="M870.2,812.2L816.4,164.4 820.9,164.1 871.4,812.1Z"/><path fill="#5a5851" d="M871.3,812.1L820.3,164.1 824.8,163.8 872.5,812Z"/><path fill="#595751" d="M872.4,812L824.2,163.8 828.7,163.5 873.6,811.9Z"/><path fill="#595751" d="M873.5,811.9L828.1,163.5 832.6,163.2 874.7,811.8Z"/><path fill="#595751" d="M874.5,811.9L832,163.3 836.5,163 875.8,811.8Z"/><path fill="#595751" d="M875.6,811.8L835.9,163 840.5,162.7 876.9,811.7Z"/><path fill="#595750" d="M876.7,811.7L839.9,162.8 844.4,162.5 878,811.7Z"/><path fill="#585650" d="M877.8,811.7L843.8,162.6 848.3,162.3 879.1,811.6Z"/><path fill="#585650" d="M878.9,811.6L847.7,162.4 852.2,162.2 880.1,811.6Z"/><path fill="#585650" d="M880,811.6L851.6,162.2 856.1,162 881.2,811.5Z"/><path fill="#58564f" d="M881.1,811.5L855.6,162 860.1,161.9 882.3,811.5Z"/><path fill="#57554f" d="M882.2,811.5L859.5,161.9 864,161.7 883.4,811.4Z"/><path fill="#57554f" d="M883.3,811.4L863.4,161.7 867.9,161.6 884.5,811.4Z"/><path fill="#57554e" d="M884.3,811.4L867.3,161.6 871.8,161.5 885.6,811.4Z"/><path fill="#57554e" d="M885.4,811.4L871.3,161.5 875.8,161.5 886.7,811.4Z"/><path fill="#56544e" d="M886.5,811.4L875.2,161.5 879.7,161.4 887.8,811.3Z"/><path fill="#56544d" d="M887.6,811.3L879.1,161.4 883.6,161.4 888.9,811.3Z"/><path fill="#56544d" d="M888.7,811.3L883,161.4 887.6,161.3 890,811.3Z"/><path fill="#56544d" d="M889.8,811.3L887,161.3 891.5,161.3 891.1,811.3Z"/><path fill="#55534d" d="M890.9,811.3L890.9,161.3 895.4,161.3 892.1,811.3Z"/><path fill="#55534c" d="M892,811.3L894.8,161.3 899.3,161.4 893.2,811.3Z"/><path fill="#55534c" d="M893.1,811.3L898.7,161.4 903.3,161.4 894.3,811.3Z"/><path fill="#55534c" d="M894.2,811.3L902.7,161.4 907.2,161.5 895.4,811.4Z"/><path fill="#55534c" d="M895.3,811.4L906.6,161.5 911.1,161.6 896.5,811.4Z"/><path fill="#54524c" d="M896.3,811.4L910.5,161.5 915,161.6 897.6,811.4Z"/><path fill="#54524b" d="M897.4,811.4L914.4,161.6 919,161.8 898.7,811.4Z"/><path fill="#54524b" d="M898.5,811.4L918.4,161.7 922.9,161.9 899.8,811.5Z"/><path fill="#54524b" d="M899.6,811.5L922.3,161.9 926.8,162 900.9,811.5Z"/><path fill="#54524b" d="M900.7,811.5L926.2,162 930.7,162.2 902,811.6Z"/><path fill="#54524b" d="M901.8,811.6L930.1,162.2 934.7,162.4 903,811.6Z"/><path fill="#54524b" d="M902.9,811.6L934.1,162.4 938.6,162.6 904.1,811.7Z"/><path fill="#54524b" d="M904,811.7L938,162.6 942.5,162.8 905.2,811.7Z"/><path fill="#54524b" d="M905.1,811.7L941.9,162.8 946.4,163 906.3,811.8Z"/><path fill="#54524b" d="M906.2,811.8L945.8,163 950.3,163.3 907.4,811.9Z"/><path fill="#54524b" d="M907.2,811.9L949.8,163.3 954.3,163.6 908.5,811.9Z"/><path fill="#54524b" d="M908.3,811.9L953.7,163.5 958.2,163.8 909.6,812Z"/><path fill="#54524b" d="M909.4,812L957.6,163.8 962.1,164.1 910.7,812.1Z"/><path fill="#54524b" d="M910.5,812.1L961.5,164.1 966,164.5 911.8,812.2Z"/><path fill="#54524b" d="M911.6,812.2L965.4,164.4 969.9,164.8 912.8,812.3Z"/><path fill="#54524b" d="M912.7,812.3L969.3,164.7 973.8,165.2 913.9,812.4Z"/><path fill="#54524b" d="M913.8,812.4L973.2,165.1 977.7,165.5 915,812.5Z"/><path fill="#54524b" d="M914.9,812.5L977.2,165.5 981.6,165.9 916.1,812.6Z"/><path fill="#54524b" d="M915.9,812.6L981.1,165.9 985.6,166.3 917.2,812.7Z"/><path fill="#54524b" d="M917,812.7L985,166.3 989.5,166.7 918.3,812.8Z"/><path fill="#54524b" d="M918.1,812.8L988.9,166.7 993.4,167.2 919.4,813Z"/><path fill="#55534c" d="M919.2,812.9L992.8,167.1 997.3,167.6 920.4,813.1Z"/><path fill="#55534c" d="M920.3,813.1L996.7,167.6 1001.2,168.1 921.5,813.2Z"/><path fill="#55534c" d="M921.4,813.2L1000.6,168 1005.1,168.6 922.6,813.3Z"/><path fill="#55534c" d="M922.4,813.3L1004.5,168.5 1008.9,169.1 923.7,813.5Z"/><path fill="#55534c" d="M923.5,813.5L1008.4,169 1012.8,169.6 924.8,813.6Z"/><path fill="#55534c" d="M924.6,813.6L1012.3,169.5 1016.7,170.2 925.8,813.8Z"/><path fill="#55534c" d="M925.7,813.8L1016.1,170.1 1020.6,170.7 926.9,813.9Z"/><path fill="#55534c" d="M926.8,813.9L1020,170.6 1024.5,171.3 928,814.1Z"/><path fill="#55534c" d="M927.8,814.1L1023.9,171.2 1028.4,171.9 929.1,814.3Z"/><path fill="#55534c" d="M928.9,814.2L1027.8,171.8 1032.3,172.5 930.2,814.4Z"/><path fill="#55534c" d="M930,814.4L1031.7,172.4 1036.1,173.1 931.2,814.6Z"/><path fill="#55534c" d="M931.1,814.6L1035.6,173 1040,173.8 932.3,814.8Z"/><path fill="#55534c" d="M932.2,814.8L1039.4,173.7 1043.9,174.4 933.4,815Z"/><path fill="#55534c" d="M933.2,814.9L1043.3,174.3 1047.8,175.1 934.5,815.2Z"/><path fill="#55534c" d="M934.3,815.1L1047.2,175 1051.6,175.8 935.5,815.3Z"/><path fill="#55534c" d="M935.4,815.3L1051,175.7 1055.5,176.5 936.6,815.5Z"/><path fill="#55534c" d="M936.4,815.5L1054.9,176.4 1059.3,177.2 937.7,815.7Z"/><path fill="#55534c" d="M937.5,815.7L1058.8,177.1 1063.2,178 938.8,815.9Z"/><path fill="#55534c" d="M938.6,815.9L1062.6,177.9 1067,178.7 939.8,816.2Z"/><path fill="#56544d" d="M939.7,816.1L1066.5,178.6 1070.9,179.5 940.9,816.4Z"/><path fill="#56544d" d="M940.7,816.3L1070.3,179.4 1074.7,180.3 942,816.6Z"/><path fill="#56544d" d="M941.8,816.6L1074.2,180.2 1078.6,181.1 943,816.8Z"/><path fill="#56544d" d="M942.9,816.8L1078,181 1082.4,181.9 944.1,817.1Z"/><path fill="#56544d" d="M943.9,817L1081.8,181.8 1086.3,182.8 945.2,817.3Z"/><path fill="#57554e" d="M945,817.3L1085.7,182.7 1090.1,183.6 946.2,817.5Z"/><path fill="#57554e" d="M946.1,817.5L1089.5,183.5 1093.9,184.5 947.3,817.8Z"/><path fill="#57554e" d="M947.1,817.7L1093.3,184.4 1097.7,185.4 948.3,818Z"/><path fill="#57554e" d="M948.2,818L1097.2,185.3 1101.6,186.3 949.4,818.3Z"/><path fill="#57554e" d="M949.3,818.2L1101,186.2 1105.4,187.3 950.5,818.5Z"/><path fill="#58564f" d="M950.3,818.5L1104.8,187.1 1109.2,188.2 951.5,818.8Z"/><path fill="#58564f" d="M951.4,818.8L1108.6,188.1 1113,189.2 952.6,819.1Z"/><path fill="#58564f" d="M952.4,819L1112.4,189 1116.8,190.1 953.6,819.3Z"/><path fill="#58564f" d="M953.5,819.3L1116.2,190 1120.6,191.1 954.7,819.6Z"/><path fill="#58564f" d="M954.5,819.6L1120,191 1124.4,192.1 955.8,819.9Z"/><path fill="#58564f" d="M955.6,819.8L1123.8,192 1128.2,193.2 956.8,820.2Z"/><path fill="#58564f" d="M956.6,820.1L1127.6,193 1132,194.2 957.9,820.5Z"/><path fill="#58564f" d="M957.7,820.4L1131.4,194.1 1135.8,195.3 958.9,820.8Z"/><path fill="#595750" d="M958.7,820.7L1135.2,195.1 1139.5,196.4 960,821.1Z"/><path fill="#595750" d="M959.8,821L1139,196.2 1143.3,197.4 961,821.4Z"/><path fill="#5a5851" d="M960.8,821.3L1142.7,197.3 1147.1,198.6 962.1,821.7Z"/><path fill="#5a5851" d="M961.9,821.6L1146.5,198.4 1150.8,199.7 963.1,822Z"/><path fill="#5b5952" d="M962.9,821.9L1150.3,199.5 1154.6,200.8 964.1,822.3Z"/><path fill="#5c5a53" d="M964,822.2L1154,200.7 1158.3,202 965.2,822.6Z"/><path fill="#5c5a53" d="M965,822.6L1157.8,201.8 1162.1,203.2 966.2,822.9Z"/><path fill="#5d5b54" d="M966.1,822.9L1161.5,203 1165.8,204.3 967.3,823.3Z"/><path fill="#5e5c55" d="M967.1,823.2L1165.3,204.2 1169.6,205.6 968.3,823.6Z"/><path fill="#5e5c55" d="M968.1,823.6L1169,205.4 1173.3,206.8 969.3,824Z"/><path fill="#5f5d56" d="M969.2,823.9L1172.7,206.6 1177,208 970.4,824.3Z"/><path fill="#5f5d56" d="M970.2,824.2L1176.5,207.8 1180.7,209.3 971.4,824.6Z"/><path fill="#605e57" d="M971.2,824.6L1180.2,209.1 1184.5,210.5 972.4,825Z"/><path fill="#605e57" d="M972.3,824.9L1183.9,210.4 1188.2,211.8 973.5,825.4Z"/><path fill="#605e57" d="M973.3,825.3L1187.6,211.6 1191.9,213.1 974.5,825.7Z"/><path fill="#605e57" d="M974.3,825.7L1191.3,212.9 1195.6,214.5 975.5,826.1Z"/><path fill="#615f58" d="M975.4,826L1195,214.3 1199.3,215.8 976.5,826.5Z"/><path fill="#626059" d="M976.4,826.4L1198.7,215.6 1202.9,217.2 977.6,826.8Z"/><path fill="#63615a" d="M977.4,826.8L1202.4,217 1206.6,218.5 978.6,827.2Z"/><path fill="#65635c" d="M978.4,827.2L1206.1,218.3 1210.3,219.9 979.6,827.6Z"/><path fill="#67655e" d="M979.5,827.5L1209.8,219.7 1214,221.3 980.6,828Z"/><path fill="#696760" d="M980.5,827.9L1213.4,221.1 1217.6,222.7 981.7,828.4Z"/><path fill="#6b6962" d="M981.5,828.3L1217.1,222.5 1221.3,224.2 982.7,828.8Z"/><path fill="#6c6a63" d="M982.5,828.7L1220.7,223.9 1224.9,225.6 983.7,829.2Z"/><path fill="#6d6b64" d="M983.5,829.1L1224.4,225.4 1228.6,227.1 984.7,829.6Z"/><path fill="#6e6c65" d="M984.5,829.5L1228,226.9 1232.2,228.6 985.7,830Z"/><path fill="#6e6c65" d="M985.6,829.9L1231.7,228.3 1235.8,230.1 986.7,830.4Z"/><path fill="#706e67" d="M986.6,830.4L1235.3,229.8 1239.5,231.6 987.7,830.8Z"/><path fill="#75736c" d="M987.6,830.8L1238.9,231.3 1243.1,233.1 988.7,831.3Z"/><path fill="#7b7972" d="M988.6,831.2L1242.5,232.9 1246.7,234.6 989.7,831.7Z"/><path fill="#828078" d="M989.6,831.6L1246.2,234.4 1250.3,236.2 990.7,832.1Z"/><path fill="#87857d" d="M990.6,832.1L1249.8,236 1253.9,237.8 991.7,832.6Z"/><path fill="#8a8880" d="M991.6,832.5L1253.4,237.5 1257.5,239.4 992.7,833Z"/><path fill="#8a8880" d="M992.6,832.9L1257,239.1 1261.1,241 993.7,833.5Z"/><path fill="#8d8b83" d="M993.6,833.4L1260.5,240.7 1264.6,242.6 994.7,833.9Z"/><path fill="#929088" d="M994.6,833.8L1264.1,242.4 1268.2,244.2 995.7,834.4Z"/><path fill="#98968e" d="M995.6,834.3L1267.7,244 1271.8,245.9 996.7,834.8Z"/><path fill="#9d9b93" d="M996.5,834.7L1271.2,245.6 1275.3,247.6 997.7,835.3Z"/><path fill="#a09e96" d="M997.5,835.2L1274.8,247.3 1278.9,249.3 998.7,835.7Z"/><path fill="#a09e96" d="M998.5,835.7L1278.3,249 1282.4,251 999.6,836.2Z"/><path fill="#a19f97" d="M999.5,836.2L1281.9,250.7 1286,252.7 1000.6,836.7Z"/><path fill="#a2a098" d="M1000.5,836.6L1285.4,252.4 1289.5,254.4 1001.6,837.2Z"/><path fill="#a4a29a" d="M1001.5,837.1L1288.9,254.1 1293,256.1 1002.6,837.7Z"/><path fill="#a5a39b" d="M1002.4,837.6L1292.5,255.9 1296.5,257.9 1003.6,838.2Z"/><path fill="#a6a49c" d="M1003.4,838.1L1296,257.6 1300,259.7 1004.5,838.6Z"/><path fill="#a6a49c" d="M1004.4,838.6L1299.5,259.4 1303.5,261.5 1005.5,839.1Z"/><path fill="#a6a49c" d="M1005.4,839.1L1303,261.2 1307,263.3 1006.5,839.6Z"/><path fill="#a6a49c" d="M1006.3,839.6L1306.5,263 1310.5,265.1 1007.4,840.2Z"/><path fill="#a6a49c" d="M1007.3,840.1L1309.9,264.8 1313.9,266.9 1008.4,840.7Z"/><path fill="#a6a49c" d="M1008.3,840.6L1313.4,266.7 1317.4,268.8 1009.4,841.2Z"/><path fill="#a6a49c" d="M1009.2,841.1L1316.9,268.5 1320.9,270.7 1010.3,841.7Z"/><path fill="#a6a49c" d="M1010.2,841.6L1320.3,270.4 1324.3,272.6 1011.3,842.2Z"/><path fill="#a6a49c" d="M1011.1,842.1L1323.8,272.3 1327.7,274.5 1012.2,842.7Z"/><path fill="#a6a49c" d="M1012.1,842.7L1327.2,274.2 1331.2,276.4 1013.2,843.3Z"/><path fill="#a6a49c" d="M1013,843.2L1330.6,276.1 1334.6,278.3 1014.1,843.8Z"/><path fill="#a6a49c" d="M1014,843.7L1334.1,278 1338,280.2 1015.1,844.4Z"/><path fill="#a6a49c" d="M1014.9,844.3L1337.5,279.9 1341.4,282.2 1016,844.9Z"/>
</g>
<path fill="#807f77" fill-rule="evenodd" d="M1141.9,315.9L1148.6,325.4 1154.7,335.1 1160,345.1 1164.7,355.3 1168.7,365.6 1172,376.1 1174.6,386.6 1176.5,397.3 1177.6,408 1178,418.7 1177.7,429.5 1176.7,440.1 1174.9,450.8 1172.4,461.3 1169.2,471.7 1165.3,482 1160.7,492 1155.4,501.9 1149.4,511.6 1142.8,520.9 1135.5,530 1127.7,538.8 1119.2,547.2 1110.2,555.3 1100.6,563 1090.5,570.3 1080,577.2 1068.9,583.6 1057.5,589.6 1045.6,595.1 1033.4,600.1 1020.8,604.6 1007.9,608.6 994.8,612.1 981.5,615 967.9,617.4 954.2,619.3 940.4,620.5 926.5,621.3 912.6,621.4 898.6,621 884.7,620.1 870.9,618.5 857.2,616.5 843.6,613.8 830.2,610.7 817.1,607 804.2,602.8 791.5,598 779.3,592.8 767.4,587.1 755.8,580.9 744.8,574.3 734.1,567.2 724,559.7 714.3,551.9 705.3,543.6 696.7,535 688.8,526.1 681.5,516.9 674.8,507.4 668.7,497.7 663.4,487.7 658.7,477.5 654.7,467.2 651.4,456.7 648.8,446.2 646.9,435.5 645.8,424.8 645.4,414.1 645.7,403.3 646.7,392.7 648.5,382 651,371.5 654.2,361.1 658.1,350.8 662.7,340.8 668,330.9 674,321.2 680.6,311.9 687.9,302.8 695.7,294 704.2,285.6 713.2,277.5 722.8,269.8 732.9,262.5 743.4,255.6 754.5,249.2 765.9,243.2 777.8,237.7 790,232.7 802.6,228.2 815.5,224.2 828.6,220.7 841.9,217.8 855.5,215.4 869.2,213.5 883,212.3 896.9,211.5 910.8,211.4 924.8,211.8 938.7,212.7 952.5,214.3 966.2,216.3 979.8,219 993.2,222.1 1006.3,225.8 1019.2,230 1031.9,234.8 1044.1,240 1056,245.7 1067.6,251.9 1078.6,258.5 1089.3,265.6 1099.4,273.1 1109.1,280.9 1118.1,289.2 1126.7,297.8 1134.6,306.7 1141.9,315.9Z M1135.8,316.3L1142.3,325.5 1148.2,335 1153.4,344.7 1158,354.6 1161.9,364.6 1165.1,374.8 1167.6,385.1 1169.4,395.5 1170.5,405.9 1170.9,416.4 1170.6,426.8 1169.6,437.2 1167.9,447.6 1165.5,457.8 1162.3,467.9 1158.5,477.9 1154,487.7 1148.9,497.3 1143.1,506.7 1136.6,515.8 1129.6,524.7 1121.9,533.2 1113.7,541.4 1104.9,549.3 1095.6,556.8 1085.8,563.9 1075.5,570.6 1064.8,576.9 1053.6,582.7 1042.1,588 1030.2,592.9 1017.9,597.3 1005.4,601.2 992.6,604.6 979.6,607.4 966.5,609.7 953.1,611.5 939.7,612.8 926.1,613.5 912.6,613.6 899,613.2 885.5,612.3 872,610.8 858.7,608.8 845.5,606.2 832.4,603.2 819.6,599.6 807.1,595.5 794.8,590.9 782.9,585.8 771.3,580.2 760.1,574.2 749.3,567.7 738.9,560.9 729.1,553.6 719.7,545.9 710.8,537.9 702.5,529.5 694.8,520.9 687.7,511.9 681.2,502.7 675.3,493.2 670.1,483.5 665.5,473.6 661.6,463.6 658.4,453.4 655.9,443.1 654.1,432.7 653,422.3 652.6,411.8 652.9,401.4 653.9,391 655.6,380.6 658,370.4 661.2,360.3 665,350.3 669.5,340.5 674.6,330.9 680.4,321.5 686.9,312.4 693.9,303.5 701.6,295 709.8,286.8 718.6,278.9 727.9,271.4 737.7,264.3 748,257.6 758.7,251.3 769.9,245.5 781.4,240.2 793.3,235.3 805.6,230.9 818.1,227 830.9,223.6 843.9,220.8 857,218.5 870.4,216.7 883.8,215.4 897.4,214.7 910.9,214.6 924.5,215 938,215.9 951.5,217.4 964.8,219.4 978,222 991.1,225 1003.9,228.6 1016.4,232.7 1028.7,237.3 1040.6,242.4 1052.2,248 1063.4,254 1074.2,260.5 1084.6,267.3 1094.4,274.6 1103.8,282.3 1112.7,290.3 1121,298.7 1128.7,307.3 1135.8,316.3Z"/>
<path fill="#807f77" fill-rule="evenodd" d="M1142.5,317.8L1149.2,327.3 1155.3,337.1 1160.7,347.1 1165.4,357.3 1169.4,367.6 1172.7,378.1 1175.3,388.7 1177.2,399.4 1178.3,410.2 1178.7,420.9 1178.4,431.7 1177.3,442.4 1175.6,453.1 1173.1,463.6 1169.8,474.1 1165.9,484.4 1161.3,494.5 1156,504.4 1150,514 1143.4,523.4 1136.1,532.6 1128.2,541.4 1119.7,549.8 1110.7,557.9 1101.1,565.7 1091,573 1080.4,579.9 1069.3,586.3 1057.8,592.3 1045.9,597.8 1033.6,602.9 1021,607.4 1008.1,611.4 995,614.9 981.6,617.8 968,620.2 954.2,622.1 940.4,623.3 926.4,624.1 912.5,624.2 898.5,623.8 884.5,622.9 870.7,621.3 856.9,619.2 843.3,616.6 829.9,613.4 816.7,609.7 803.7,605.5 791.1,600.8 778.8,595.5 766.8,589.8 755.3,583.6 744.2,576.9 733.5,569.8 723.3,562.3 713.7,554.5 704.6,546.2 696,537.6 688,528.6 680.7,519.4 674,509.9 667.9,500.1 662.5,490.1 657.8,479.9 653.8,469.6 650.5,459.1 647.9,448.5 646,437.8 644.9,427 644.5,416.3 644.8,405.5 645.9,394.8 647.6,384.1 650.1,373.6 653.4,363.1 657.3,352.8 661.9,342.7 667.2,332.8 673.2,323.2 679.8,313.8 687.1,304.6 695,295.8 703.5,287.4 712.5,279.3 722.1,271.5 732.2,264.2 742.8,257.3 753.9,250.9 765.4,244.9 777.3,239.4 789.6,234.3 802.2,229.8 815.1,225.8 828.2,222.3 841.6,219.4 855.2,217 869,215.1 882.8,213.9 896.8,213.1 910.7,213 924.7,213.4 938.7,214.3 952.5,215.9 966.3,218 979.9,220.6 993.3,223.8 1006.5,227.5 1019.5,231.7 1032.1,236.4 1044.4,241.7 1056.4,247.4 1067.9,253.6 1079,260.3 1089.7,267.4 1099.9,274.9 1109.5,282.7 1118.6,291 1127.2,299.6 1135.2,308.6 1142.5,317.8Z M1135.8,316.3L1142.3,325.5 1148.2,335 1153.4,344.7 1158,354.6 1161.9,364.6 1165.1,374.8 1167.6,385.1 1169.4,395.5 1170.5,405.9 1170.9,416.4 1170.6,426.8 1169.6,437.2 1167.9,447.6 1165.5,457.8 1162.3,467.9 1158.5,477.9 1154,487.7 1148.9,497.3 1143.1,506.7 1136.6,515.8 1129.6,524.7 1121.9,533.2 1113.7,541.4 1104.9,549.3 1095.6,556.8 1085.8,563.9 1075.5,570.6 1064.8,576.9 1053.6,582.7 1042.1,588 1030.2,592.9 1017.9,597.3 1005.4,601.2 992.6,604.6 979.6,607.4 966.5,609.7 953.1,611.5 939.7,612.8 926.1,613.5 912.6,613.6 899,613.2 885.5,612.3 872,610.8 858.7,608.8 845.5,606.2 832.4,603.2 819.6,599.6 807.1,595.5 794.8,590.9 782.9,585.8 771.3,580.2 760.1,574.2 749.3,567.7 738.9,560.9 729.1,553.6 719.7,545.9 710.8,537.9 702.5,529.5 694.8,520.9 687.7,511.9 681.2,502.7 675.3,493.2 670.1,483.5 665.5,473.6 661.6,463.6 658.4,453.4 655.9,443.1 654.1,432.7 653,422.3 652.6,411.8 652.9,401.4 653.9,391 655.6,380.6 658,370.4 661.2,360.3 665,350.3 669.5,340.5 674.6,330.9 680.4,321.5 686.9,312.4 693.9,303.5 701.6,295 709.8,286.8 718.6,278.9 727.9,271.4 737.7,264.3 748,257.6 758.7,251.3 769.9,245.5 781.4,240.2 793.3,235.3 805.6,230.9 818.1,227 830.9,223.6 843.9,220.8 857,218.5 870.4,216.7 883.8,215.4 897.4,214.7 910.9,214.6 924.5,215 938,215.9 951.5,217.4 964.8,219.4 978,222 991.1,225 1003.9,228.6 1016.4,232.7 1028.7,237.3 1040.6,242.4 1052.2,248 1063.4,254 1074.2,260.5 1084.6,267.3 1094.4,274.6 1103.8,282.3 1112.7,290.3 1121,298.7 1128.7,307.3 1135.8,316.3Z"/>
<circle r="100.6" transform="matrix(2.245,-0.97996,1.3058,1.74278,911.8,414.1)" vector-effect="non-scaling-stroke" fill="none" stroke="#8f8e85" stroke-width="2"/>
<g clip-path="url(#cpOuter)" mask="url(#mFront)">
<circle r="103" transform="matrix(2.245,-0.97996,1.3058,1.74278,911.6,418.4)" vector-effect="non-scaling-stroke" fill="none" stroke="#5e5e59" stroke-width="1.7"/><circle r="102.8" transform="matrix(2.245,-0.97996,1.3058,1.74278,911.6,418.1)" vector-effect="non-scaling-stroke" fill="none" stroke="#666661" stroke-width="1.7"/><circle r="102.6" transform="matrix(2.245,-0.97996,1.3058,1.74278,911.6,417.8)" vector-effect="non-scaling-stroke" fill="none" stroke="#6a6a65" stroke-width="1.7"/><circle r="102.4" transform="matrix(2.245,-0.97996,1.3058,1.74278,911.6,417.5)" vector-effect="non-scaling-stroke" fill="none" stroke="#767670" stroke-width="1.7"/><circle r="102.2" transform="matrix(2.245,-0.97996,1.3058,1.74278,911.6,417.2)" vector-effect="non-scaling-stroke" fill="none" stroke="#7b7b76" stroke-width="1.7"/><circle r="102" transform="matrix(2.245,-0.97996,1.3058,1.74278,911.7,416.8)" vector-effect="non-scaling-stroke" fill="none" stroke="#8a8a84" stroke-width="1.7"/><circle r="101.7" transform="matrix(2.245,-0.97996,1.3058,1.74278,911.7,416.5)" vector-effect="non-scaling-stroke" fill="none" stroke="#9b9a93" stroke-width="1.7"/><circle r="101.5" transform="matrix(2.245,-0.97996,1.3058,1.74278,911.7,416.2)" vector-effect="non-scaling-stroke" fill="none" stroke="#b5b3a9" stroke-width="1.7"/><circle r="101.3" transform="matrix(2.245,-0.97996,1.3058,1.74278,911.7,415.9)" vector-effect="non-scaling-stroke" fill="none" stroke="#e2dfd4" stroke-width="1.7"/><circle r="101.1" transform="matrix(2.245,-0.97996,1.3058,1.74278,911.7,415.5)" vector-effect="non-scaling-stroke" fill="none" stroke="#c4c0b2" stroke-width="1.7"/><circle r="100.9" transform="matrix(2.245,-0.97996,1.3058,1.74278,911.7,415.2)" vector-effect="non-scaling-stroke" fill="none" stroke="#b7b3a5" stroke-width="1.7"/><circle r="100.6" transform="matrix(2.245,-0.97996,1.3058,1.74278,911.7,414.9)" vector-effect="non-scaling-stroke" fill="none" stroke="#9f9b8d" stroke-width="1.7"/><circle r="100.4" transform="matrix(2.245,-0.97996,1.3058,1.74278,911.7,414.6)" vector-effect="non-scaling-stroke" fill="none" stroke="#9a9688" stroke-width="1.7"/><circle r="100.2" transform="matrix(2.245,-0.97996,1.3058,1.74278,911.7,414.3)" vector-effect="non-scaling-stroke" fill="none" stroke="#959183" stroke-width="1.7"/>
</g>
<path d="M848.9,611.7L855.2,612.9 861.5,613.9 867.8,614.9 874.1,615.7 880.5,616.4 886.9,617 893.3,617.5 899.7,617.9 906.1,618.1 912.5,618.2 919,618.2 925.4,618.1 931.8,617.9 938.2,617.5 944.6,617 950.9,616.4 957.3,615.7 963.6,614.8 969.8,613.9 976.1,612.8 982.3,611.6 988.5,610.3 994.6,608.8 1000.7,607.3 1006.7,605.6 1012.6,603.8 1018.5,601.9 1024.4,599.9 1030.1,597.8 1035.8,595.6 1041.5,593.3 1047,590.9 1052.5,588.3 1057.8,585.7 1063.1,583 1068.3,580.1 1073.4,577.2 1078.5,574.1 1083.4,571 1088.2,567.8 1092.9,564.5 1097.5,561.1 1102,557.6 1106.3,554 1110.6,550.4 1114.7,546.6 1118.8,542.8 1122.7,538.9 1126.4,535 1130.1,530.9 1133.6,526.8 1136.9,522.7 1140.2,518.4 1143.3,514.2 1146.3,509.8 1149.1,505.4 1151.8,500.9 1154.3,496.4 1156.7,491.9 1159,487.3" fill="none" stroke="url(#gStreak)" stroke-width="2.6" filter="url(#b1)"/>
<g id="handle">
<g clip-path="url(#cpH)">
<path d="M651.5,372C650.8,373.8 648.4,379.8 647.5,383C646.6,386.2 646.5,387.4 646.1,391.4C645.7,395.4 645.7,401.8 645.2,407C644.7,412.2 645,415.8 643.3,422.6C641.6,429.5 638.6,440.1 634.8,448.1C631,456.1 625.8,463.2 620.6,470.8C615.4,478.4 609.6,486.9 603.5,493.5C597.4,500.1 590.8,504.9 583.7,510.6C576.6,516.3 568.1,521.5 561,527.6C553.9,533.8 547.2,539.9 541.1,547.5C535,555.1 528.6,564.5 524.1,573C519.6,581.5 516.5,590.8 514.1,598.6C511.7,606.4 510.2,613.9 509.5,620C508.8,626.1 508.8,630.2 509.6,635C510.4,639.8 511,642.5 514.5,648.9C518,655.3 523.5,666.6 530.8,673.4C538.1,680.2 547.6,685.6 558.1,689.8C568.6,694 582.1,697.1 593.5,698.8C604.9,700.5 616.8,700 626.2,700.2C635.6,700.4 641.9,700.5 650,700.2C658.1,699.9 665.3,699.2 674.6,698.6C683.9,698 695.9,696.3 706,696.6C716.1,696.9 726,698.4 735.4,700.5C744.8,702.6 753,705.3 762.6,709C772.2,712.7 782.1,718 793.2,722.6C804.3,727.2 823,734.3 829,736.6L829,736.6C829.6,733.8 831.8,725.7 832.6,720C833.5,714.3 833.9,707.5 834.1,702.2C834.3,696.9 834.6,693.1 834,688C833.4,682.9 832,677.2 830.7,671.5C829.5,665.8 828.2,659.7 826.5,654C824.8,648.3 822.4,642.8 820.5,637.5C818.6,632.2 817.1,627 815,622C812.9,617 808.9,610.1 807.7,607.7L832,613 854.6,618.9 L861.3,620.8 871.7,622.3 882.1,623.4 892.6,624.3 903.1,624.8 913.6,625 924.2,624.9 934.7,624.5 945.1,623.8 955.6,622.7 965.9,621.3 976.2,619.7 986.3,617.7L930,600 L860,590 L812,575 L770,550 L730,515 L700,470 L678,425 L664,385Z" fill="url(#gBody)"/>
<path d="M740.5,599.9C741.6,602.8 745,611.3 747,617C749,622.7 750.7,628.3 752.4,634C754.1,639.7 755.8,645.3 757.2,651C758.6,656.7 759.9,661.9 760.9,668.1C761.9,674.4 763.1,683 763.4,688.5C763.7,694 762.7,699.2 762.6,701.3L762.6,701.3C765.2,702.5 772.9,706 778,708.5C783.1,711 787.7,713.5 793.2,716.5C798.7,719.5 805,723.1 811,726.5C817,729.9 826,734.9 829,736.6L829,736.6C829.6,733.8 831.8,725.7 832.6,720C833.5,714.3 833.9,707.5 834.1,702.2C834.3,696.9 834.6,693.1 834,688C833.4,682.9 832,677.2 830.7,671.5C829.5,665.8 828.2,659.7 826.5,654C824.8,648.3 822.4,642.8 820.5,637.5C818.6,632.2 817.1,627 815,622C812.9,617 808.9,610.1 807.7,607.7L807.7,607.7C802.2,607.1 786.2,605.3 775,604C763.8,602.7 746.2,600.6 740.5,599.9Z" fill="url(#gRF)"/>
<path d="M687.6,601.5C688.2,603.4 689.8,609 691.5,613C693.2,617 695.7,621 697.9,625.5C700.1,630 702,635.2 704.5,640C707,644.8 710.1,649.9 713.2,654.5C716.3,659.1 719.3,663.2 723,667.5C726.7,671.8 731.2,676.1 735.4,680C739.6,683.9 743.5,687.5 748,691C752.5,694.5 760.2,699.6 762.6,701.3L762.6,701.3C762.7,699.2 763.7,694 763.4,688.5C763.1,683 761.9,674.4 760.9,668.1C759.9,661.9 758.6,656.7 757.2,651C755.8,645.3 754.1,639.7 752.4,634C750.7,628.3 749,622.7 747,617C745,611.3 741.6,602.8 740.5,599.9L740.5,599.9C735.4,599 719.5,596.1 710,594.4C700.5,592.7 687.8,590.4 683.4,589.6Z" fill="url(#gRE)"/>
<path d="M740,694 L762.6,701.3 778,708.5 793.2,716.5 811,726.5 829,736.6 L829,742 L740,708Z" fill="#4a4943"/>
<g clip-path="url(#cpRC)"><path d="M567.6,634C569.6,634.7 574.7,636.8 579.9,638C585.1,639.2 592.1,640.5 598.9,641.3C605.7,642.1 613.4,643.1 620.7,642.9C628,642.7 636.6,641.5 642.5,640.2C648.4,638.9 651.6,637.5 656.1,635.3C660.6,633.1 665.6,630.3 669.7,627.1C673.8,623.9 677.6,620.6 680.6,616.3C683.6,612 686.4,604 687.6,601.5L687.6,601.5C688.2,603.4 689.8,609 691.5,613C693.2,617 695.7,621 697.9,625.5C700.1,630 702,635.2 704.5,640C707,644.8 710.1,649.9 713.2,654.5C716.3,659.1 719.3,663.2 723,667.5C726.7,671.8 731.2,676.1 735.4,680C739.6,683.9 743.5,687.5 748,691C752.5,694.5 760.2,699.6 762.6,701.3L762.6,701.3C758,700.8 745.1,699.4 735,698.3C724.9,697.2 712.1,695.4 702,694.6C691.9,693.9 682.7,694 674.6,693.8C666.5,693.6 661.8,693.8 653.5,693.2C645.2,692.6 633.6,691.8 625.1,690.2C616.6,688.6 609,686.2 602.4,683.8C595.8,681.4 590.3,678.6 585.4,675.8C580.5,673 576.1,670.2 572.9,666.8C569.7,663.4 567.5,658.5 566.1,655.4C564.7,652.3 564.6,650.1 564.4,648C564.1,645.9 564.1,645.2 564.6,643C565.1,640.8 566.9,636.3 567.4,635Z" fill="url(#gRC)"/>
<path d="M585,652 C615,668 660,672 705,672" fill="none" stroke="#a3a39c" stroke-opacity="0.55" stroke-width="8" filter="url(#b4)"/>
<path d="M640,640 C660,660 690,685 720,700" fill="none" stroke="#6f6c61" stroke-opacity="0.5" stroke-width="12" filter="url(#b4)"/>
<path d="M650,700 C690,696 725,700 765,708" fill="none" stroke="#55534c" stroke-opacity="0.7" stroke-width="7" filter="url(#b2)"/>
</g>
<path d="M634,529C632.2,531.1 627.2,537.5 623.4,541.8C619.6,546.1 615.2,550.5 611,555C606.8,559.5 602.7,564.2 598.4,569C594.1,573.8 589.2,579.1 585,584C580.8,588.9 576.8,593.5 573,598.5C569.2,603.5 565.2,609.1 562.5,614C559.8,618.9 558.2,623.5 556.5,628C554.8,632.5 553.3,636.6 552.4,641C551.5,645.4 550.3,649.4 551.3,654.4C552.2,659.4 554.2,665.7 558.1,670.7C562,675.7 567.6,680.4 574.4,684.3C581.2,688.2 590.3,691.6 598.9,693.9C607.5,696.2 617.7,697.4 626.2,698.2C634.7,699 641,698.9 650,698.8C659,698.7 670.7,698 680,697.6C689.3,697.2 701.7,696.6 706,696.4L735,700L762.6,701.3C758,700.8 745.1,699.4 735,698.3C724.9,697.2 712.1,695.4 702,694.6C691.9,693.9 682.7,694 674.6,693.8C666.5,693.6 661.8,693.8 653.5,693.2C645.2,692.6 633.6,691.8 625.1,690.2C616.6,688.6 609,686.2 602.4,683.8C595.8,681.4 590.3,678.6 585.4,675.8C580.5,673 576.1,670.2 572.9,666.8C569.7,663.4 567.5,658.5 566.1,655.4C564.7,652.3 564.6,650.1 564.4,648C564.1,645.9 564.1,645.2 564.6,643C565.1,640.8 566.9,636.3 567.4,635L567.6,634C568.3,631.5 569.2,623.8 571.7,619C574.2,614.2 578.1,609.7 582.6,605.4C587.1,601.1 592.5,596.4 598.9,593.1C605.2,589.8 613,587.3 620.7,585.8C628.4,584.3 641,584.3 645,584Z" fill="url(#gBand)"/>
<path d="M650,396 C644,440 628,470 616,500 C612,520 640,560 660,572 C690,582 720,586 740,590" fill="none" stroke="#56554f" stroke-opacity="0.62" stroke-width="15" filter="url(#b8)"/>
<path d="M662,470 C676,505 700,535 735,560" fill="none" stroke="#9a988e" stroke-opacity="0.7" stroke-width="9" filter="url(#b4)"/>
<path d="M645,395 C642,430 628,462 598,496" fill="none" stroke="#b4b4ae" stroke-opacity="0.9" stroke-width="8" filter="url(#b2)"/>
<path d="M588,600 C610,584 650,578 690,586 C730,594 780,602 830,610" fill="none" stroke="#4a4944" stroke-opacity="0.85" stroke-width="9" filter="url(#b4)"/>
<path d="M640,551C646.7,553 666.7,558.9 680,563C693.3,567.1 706.7,571.4 720,575.5C733.3,579.6 746.7,583.6 760,587.5C773.3,591.4 786.7,595.2 800,598.6C813.3,602 826.7,605.2 840,607.8C853.3,610.4 873.3,613.3 880,614.4" fill="none" stroke="#b9b5a6" stroke-opacity="0.7" stroke-width="13" stroke-linecap="round" filter="url(#b4)"/>
<path d="M628,532 C655,545 700,565 760,584" fill="none" stroke="#aaa699" stroke-opacity="0.8" stroke-width="20" stroke-linecap="round" filter="url(#b8)"/>
<path d="M720,575.5C726.7,577.5 746.7,583.6 760,587.5C773.3,591.4 786.7,595.2 800,598.6C813.3,602 826.7,605.2 840,607.8C853.3,610.4 873.3,613.3 880,614.4" fill="none" stroke="#fffcf0" stroke-opacity="1" stroke-width="3.6" stroke-linecap="round" filter="url(#b1)"/>
<g clip-path="url(#cpRA)">
<path d="M555.3,533.3C557.7,531.1 564.3,523.8 569.5,520.2C574.7,516.7 580.8,513.9 586.5,512C592.2,510.1 598.3,509.2 603.5,508.6C608.7,508 613,508.1 617.7,508.6C622.5,509.1 627.5,510.1 632,511.5C636.5,512.9 642.6,515.9 644.7,516.8L644.7,516.8C642.9,518.8 637.5,524.8 634,529C630.5,533.2 627.2,537.5 623.4,541.8C619.6,546.1 615.2,550.5 611,555C606.8,559.5 602.7,564.2 598.4,569C594.1,573.8 589.2,579.1 585,584C580.8,588.9 576.8,593.5 573,598.5C569.2,603.5 565.2,609.1 562.5,614C559.8,618.9 558.2,623.5 556.5,628C554.8,632.5 553.3,636.6 552.4,641C551.5,645.4 550.3,649.4 551.3,654.4C552.2,659.4 554.2,665.7 558.1,670.7C562,675.7 567.6,680.4 574.4,684.3C581.2,688.2 590.3,691.6 598.9,693.9C607.5,696.2 617.7,697.4 626.2,698.2C634.7,699 641,698.9 650,698.8C659,698.7 670.7,698 680,697.6C689.3,697.2 701.7,696.6 706,696.4L706,696.6C700.8,696.9 683.9,698 674.6,698.6C665.3,699.2 658.1,699.9 650,700.2C641.9,700.5 635.6,700.4 626.2,700.2C616.8,700 604.9,700.5 593.5,698.8C582.1,697.1 568.6,694 558.1,689.8C547.6,685.6 538.1,680.2 530.8,673.4C523.5,666.6 518,655.3 514.5,648.9C511,642.5 510.4,639.8 509.6,635C508.8,630.2 508.8,626.1 509.5,620C510.2,613.9 511.7,606.4 514.1,598.6C516.5,590.8 519.6,581.5 524.1,573C528.6,564.5 535,555.1 541.1,547.5C547.2,539.9 557.7,530.9 561,527.6Z" fill="#5c5b56"/>
<path d="M524.1,573C522.4,577.3 516.5,590.8 514.1,598.6C511.7,606.4 510.2,613.9 509.5,620C508.8,626.1 508.8,630.2 509.6,635C510.4,639.8 511,642.5 514.5,648.9C518,655.3 523.5,666.6 530.8,673.4C538.1,680.2 547.6,685.6 558.1,689.8C568.6,694 582.1,697.1 593.5,698.8C604.9,700.5 616.8,700 626.2,700.2C635.6,700.4 646,700.2 650,700.2" fill="none" stroke="#4d4c47" stroke-opacity="0.7" stroke-width="12" filter="url(#b8)"/>
<path d="M516,650 C540,688 600,703 668,699" fill="none" stroke="#45443f" stroke-opacity="0.7" stroke-width="20" filter="url(#b8)"/>
<path d="M509.6,635C510.4,637.3 511,642.5 514.5,648.9C518,655.3 523.5,666.6 530.8,673.4C538.1,680.2 547.6,685.6 558.1,689.8C568.6,694 582.1,697.1 593.5,698.8C604.9,700.5 616.8,700 626.2,700.2C635.6,700.4 646,700.2 650,700.2" fill="none" stroke="#84837d" stroke-opacity="0.6" stroke-width="3" filter="url(#b1)"/>
<path d="M562,534 C580,519 612,511 644,521" fill="none" stroke="#4c4b46" stroke-opacity="0.75" stroke-width="5" filter="url(#b2)"/>
<path d="M634,531 C610,556 578,592 560,622 C552,640 550,655 556,668" fill="none" stroke="#4a4944" stroke-opacity="0.6" stroke-width="9" filter="url(#b4)"/>
<path d="M556,548 C574,531 602,524 630,528" fill="none" stroke="#b5b1a2" stroke-opacity="0.85" stroke-width="8" stroke-linecap="round" filter="url(#b4)"/>
<path d="M535,614 C536,598 543,580 557,563" fill="none" stroke="#aeada6" stroke-opacity="0.8" stroke-width="8" stroke-linecap="round" filter="url(#b4)"/>
<ellipse cx="592" cy="552" rx="27" ry="11" transform="rotate(-40 592 552)" fill="#c9c5b5" fill-opacity="0.85" filter="url(#b4)"/>
<ellipse cx="592.6" cy="550.6" rx="9" ry="5.2" transform="rotate(-32 592.6 550.6)" fill="#ffffff" filter="url(#b2)"/>
</g>
</g>
<path d="M555.3,533.3C557.7,531.1 564.3,523.8 569.5,520.2C574.7,516.7 580.8,513.9 586.5,512C592.2,510.1 598.3,509.2 603.5,508.6C608.7,508 613,508.1 617.7,508.6C622.5,509.1 627.5,510.1 632,511.5C636.5,512.9 642.6,515.9 644.7,516.8L644.7,516.8C642.9,518.8 637.5,524.8 634,529C630.5,533.2 627.2,537.5 623.4,541.8C619.6,546.1 615.2,550.5 611,555C606.8,559.5 602.7,564.2 598.4,569C594.1,573.8 589.2,579.1 585,584C580.8,588.9 576.8,593.5 573,598.5C569.2,603.5 565.2,609.1 562.5,614C559.8,618.9 558.2,623.5 556.5,628C554.8,632.5 553.3,636.6 552.4,641C551.5,645.4 550.3,649.4 551.3,654.4C552.2,659.4 554.2,665.7 558.1,670.7C562,675.7 567.6,680.4 574.4,684.3C581.2,688.2 590.3,691.6 598.9,693.9C607.5,696.2 617.7,697.4 626.2,698.2C634.7,699 641,698.9 650,698.8C659,698.7 670.7,698 680,697.6C689.3,697.2 701.7,696.6 706,696.4" fill="none" stroke="#050505" stroke-width="1.2" stroke-linejoin="round"/>
<path d="M687.6,601.5C686.4,604 683.6,612 680.6,616.3C677.6,620.6 673.8,623.9 669.7,627.1C665.6,630.3 660.6,633.1 656.1,635.3C651.6,637.5 648.4,638.9 642.5,640.2C636.6,641.5 628,642.7 620.7,642.9C613.4,643.1 605.7,642.1 598.9,641.3C592.1,640.5 585.1,639.2 579.9,638C574.7,636.8 569.6,634.7 567.6,634" fill="none" stroke="#050505" stroke-width="1.2" stroke-linejoin="round"/>
<path d="M567.6,634C568.3,631.5 569.2,623.8 571.7,619C574.2,614.2 578.1,609.7 582.6,605.4C587.1,601.1 592.5,596.4 598.9,593.1C605.2,589.8 613.4,587.3 620.7,585.8C628,584.3 635.2,584.2 642.5,584.2C649.8,584.2 657.5,585.2 664.3,586.1C671.1,587 679.5,587 683.4,589.6C687.3,592.2 686.9,599.5 687.6,601.5" fill="none" stroke="#2a2a27" stroke-width="0.8"/>
<path d="M683.4,589.6C687.8,590.4 700.5,592.7 710,594.4C719.5,596.1 729.7,598.3 740.5,599.9C751.3,601.5 763.8,602.7 775,604C786.2,605.3 798.2,606.2 807.7,607.7C817.2,609.2 824.2,611.1 832,613C839.8,614.9 850.8,617.9 854.6,618.9" fill="none" stroke="#050505" stroke-width="1.2" stroke-linejoin="round"/>
<path d="M687.6,601.5C688.2,603.4 689.8,609 691.5,613C693.2,617 695.7,621 697.9,625.5C700.1,630 702,635.2 704.5,640C707,644.8 710.1,649.9 713.2,654.5C716.3,659.1 719.3,663.2 723,667.5C726.7,671.8 731.2,676.1 735.4,680C739.6,683.9 743.5,687.5 748,691C752.5,694.5 760.2,699.6 762.6,701.3" fill="none" stroke="#050505" stroke-width="1.2" stroke-linejoin="round"/>
<path d="M740.5,599.9C741.6,602.8 745,611.3 747,617C749,622.7 750.7,628.3 752.4,634C754.1,639.7 755.8,645.3 757.2,651C758.6,656.7 759.9,661.9 760.9,668.1C761.9,674.4 763.1,683 763.4,688.5C763.7,694 762.7,699.2 762.6,701.3" fill="none" stroke="#050505" stroke-width="1.2" stroke-linejoin="round"/>
<path d="M807.7,607.7C808.9,610.1 812.9,617 815,622C817.1,627 818.6,632.2 820.5,637.5C822.4,642.8 824.8,648.3 826.5,654C828.2,659.7 829.5,665.8 830.7,671.5C832,677.2 833.4,682.9 834,688C834.6,693.1 834.3,696.9 834.1,702.2C833.9,707.5 833.5,714.3 832.6,720C831.8,725.7 829.6,733.8 829,736.6" fill="none" stroke="#050505" stroke-width="1.2" stroke-linejoin="round"/>
<path d="M762.6,701.3C765.2,702.5 772.9,706 778,708.5C783.1,711 787.7,713.5 793.2,716.5C798.7,719.5 805,723.1 811,726.5C817,729.9 826,734.9 829,736.6" fill="none" stroke="#050505" stroke-width="1.2" stroke-linejoin="round"/>
<path d="M657.9,633.2C659.4,635.8 663.7,643.8 667,649C670.3,654.2 673.7,659.5 677.5,664.7C681.3,669.9 685.8,675 690,680C694.2,685 700.8,692.1 703,694.5" fill="none" stroke="#050505" stroke-width="1.2" stroke-linejoin="round"/>
<path d="M663,630.6C664.7,633.3 669.5,641.5 673,647C676.5,652.5 680.2,658.4 684.3,663.9C688.4,669.4 693,674.9 697.5,680C702,685.1 709.2,692.1 711.5,694.5" fill="none" stroke="#050505" stroke-width="1.2" stroke-linejoin="round"/>
<path d="M566.1,653.7C568.1,654.5 573.9,656.8 578,658.2C582.1,659.6 586.5,660.9 591,662.2C595.5,663.5 600.2,664.8 605,665.8C609.8,666.8 613.2,667.9 619.5,668.4C625.8,668.9 635.4,668.8 642.5,668.6C649.6,668.4 656,667.8 662,667.2C668,666.6 672.5,665.9 678.3,664.9C684.1,663.9 691.2,662.5 697,661C702.8,659.5 710.5,656.5 713.2,655.6" fill="none" stroke="#050505" stroke-width="1.2" stroke-linejoin="round"/>
<path d="M564.4,648C563.3,648.6 560.2,650.4 558,651.6C555.8,652.8 552.5,654.8 551.4,655.4" fill="none" stroke="#050505" stroke-width="1.2" stroke-linejoin="round"/>
<path d="M567.4,635C566.9,636.3 565.1,640.8 564.6,643C564.1,645.2 564.1,645.9 564.4,648C564.6,650.1 564.7,652.3 566.1,655.4C567.5,658.5 569.7,663.4 572.9,666.8C576.1,670.2 580.5,673 585.4,675.8C590.3,678.6 595.8,681.4 602.4,683.8C609,686.2 616.6,688.6 625.1,690.2C633.6,691.8 645.2,692.6 653.5,693.2C661.8,693.8 666.5,693.6 674.6,693.8C682.7,694 691.9,693.9 702,694.6C712.1,695.4 724.9,697.2 735,698.3C745.1,699.4 758,700.8 762.6,701.3" fill="none" stroke="#050505" stroke-width="1.2" stroke-linejoin="round"/>
<path d="M558.1,689.8C564,691.3 582.1,697.1 593.5,698.8C604.9,700.5 616.8,700 626.2,700.2C635.6,700.4 641.9,700.5 650,700.2C658.1,699.9 665.3,699.2 674.6,698.6C683.9,698 695.9,696.3 706,696.6C716.1,696.9 726,698.4 735.4,700.5C744.8,702.6 753,705.3 762.6,709C772.2,712.7 782.1,718 793.2,722.6C804.3,727.2 823,734.3 829,736.6" fill="none" stroke="#1a1a18" stroke-width="0.9"/>
</g>
<path fill="#8d897d" fill-rule="evenodd" d="M1136.5,316L1143,325.3 1148.9,334.8 1154.2,344.5 1158.7,354.4 1162.6,364.5 1165.9,374.7 1168.4,385 1170.2,395.4 1171.3,405.9 1171.7,416.4 1171.4,426.8 1170.4,437.3 1168.7,447.7 1166.2,457.9 1163.1,468.1 1159.3,478.1 1154.8,487.9 1149.6,497.6 1143.8,507 1137.3,516.1 1130.2,525 1122.6,533.6 1114.3,541.8 1105.5,549.7 1096.2,557.2 1086.3,564.3 1076,571.1 1065.2,577.3 1054,583.2 1042.5,588.6 1030.5,593.4 1018.3,597.9 1005.7,601.7 992.9,605.1 979.8,608 966.6,610.3 953.2,612.1 939.8,613.4 926.2,614.1 912.6,614.2 899,613.8 885.4,612.9 871.9,611.4 858.5,609.4 845.3,606.8 832.2,603.7 819.4,600.1 806.8,596 794.5,591.4 782.5,586.3 770.9,580.7 759.6,574.7 748.8,568.2 738.4,561.3 728.5,554 719.1,546.3 710.2,538.3 701.9,529.9 694.2,521.2 687,512.2 680.5,502.9 674.6,493.4 669.3,483.7 664.8,473.8 660.9,463.7 657.6,453.5 655.1,443.2 653.3,432.8 652.2,422.3 651.8,411.8 652.1,401.4 653.1,390.9 654.8,380.5 657.3,370.3 660.4,360.1 664.2,350.1 668.7,340.3 673.9,330.6 679.7,321.2 686.2,312.1 693.3,303.2 700.9,294.6 709.2,286.4 718,278.5 727.3,271 737.2,263.9 747.5,257.1 758.3,250.9 769.5,245 781,239.6 793,234.8 805.2,230.3 817.8,226.5 830.6,223.1 843.7,220.2 856.9,217.9 870.3,216.1 883.7,214.8 897.3,214.1 910.9,214 924.5,214.4 938.1,215.3 951.6,216.8 965,218.8 978.2,221.4 991.3,224.5 1004.1,228.1 1016.7,232.2 1029,236.8 1041,241.9 1052.6,247.5 1063.9,253.5 1074.7,260 1085.1,266.9 1095,274.2 1104.4,281.9 1113.3,289.9 1121.6,298.3 1129.3,307 1136.5,316Z M1132.3,317.8L1138.7,326.9 1144.5,336.2 1149.7,345.8 1154.2,355.5 1158,365.4 1161.2,375.4 1163.6,385.6 1165.4,395.8 1166.5,406 1166.9,416.3 1166.6,426.6 1165.6,436.9 1163.9,447 1161.5,457.1 1158.4,467.1 1154.7,476.9 1150.3,486.6 1145.2,496 1139.5,505.3 1133.1,514.2 1126.2,523 1118.7,531.4 1110.6,539.5 1101.9,547.2 1092.8,554.6 1083.1,561.6 1073,568.2 1062.4,574.3 1051.4,580.1 1040,585.3 1028.3,590.1 1016.3,594.5 1004,598.3 991.4,601.6 978.6,604.4 965.6,606.7 952.5,608.5 939.2,609.7 925.9,610.4 912.6,610.5 899.2,610.1 885.9,609.2 872.6,607.8 859.5,605.8 846.5,603.3 833.7,600.2 821.1,596.7 808.7,592.6 796.6,588.1 784.9,583.1 773.5,577.6 762.4,571.7 751.8,565.3 741.6,558.6 731.9,551.4 722.7,543.9 714,536 705.8,527.8 698.2,519.2 691.2,510.4 684.8,501.3 679,492 673.8,482.4 669.3,472.7 665.5,462.8 662.3,452.8 659.9,442.6 658.1,432.4 657,422.2 656.6,411.9 656.9,401.6 657.9,391.3 659.6,381.2 662,371.1 665.1,361.1 668.8,351.3 673.2,341.6 678.3,332.2 684,322.9 690.4,314 697.3,305.2 704.8,296.8 712.9,288.7 721.6,281 730.7,273.6 740.4,266.6 750.5,260 761.1,253.9 772.1,248.1 783.5,242.9 795.2,238.1 807.2,233.7 819.5,229.9 832.1,226.6 844.9,223.8 857.9,221.5 871,219.7 884.3,218.5 897.6,217.8 910.9,217.7 924.3,218.1 937.6,219 950.9,220.4 964,222.4 977,224.9 989.8,228 1002.4,231.5 1014.8,235.6 1026.9,240.1 1038.6,245.1 1050,250.6 1061.1,256.5 1071.7,262.9 1081.9,269.6 1091.6,276.8 1100.8,284.3 1109.5,292.2 1117.7,300.4 1125.3,309 1132.3,317.8Z"/>
<g clip-path="url(#cpIn)">
<g shape-rendering="crispEdges"><path fill="#96958e" d="M747.8,703.9L534.4,285.1 538,283.3 749.3,703.2Z"/><path fill="#96958e" d="M749.1,703.3L537.5,283.6 541.1,281.8 750.6,702.5Z"/><path fill="#96958e" d="M750.4,702.6L540.6,282 544.2,280.2 751.8,701.9Z"/><path fill="#96958e" d="M751.6,702L543.8,280.4 547.4,278.7 753.1,701.2Z"/><path fill="#96958e" d="M752.9,701.3L546.9,278.9 550.5,277.2 754.4,700.6Z"/><path fill="#96958e" d="M754.2,700.7L550,277.4 553.7,275.6 755.7,700Z"/><path fill="#96958e" d="M755.5,700.1L553.2,275.9 556.8,274.2 757,699.4Z"/><path fill="#96958e" d="M756.8,699.5L556.3,274.4 560,272.7 758.3,698.8Z"/><path fill="#96958e" d="M758.1,698.9L559.5,272.9 563.1,271.2 759.6,698.2Z"/><path fill="#94938c" d="M759.4,698.3L562.7,271.4 566.3,269.8 760.9,697.6Z"/><path fill="#919089" d="M760.8,697.7L565.8,270 569.5,268.3 762.3,697Z"/><path fill="#8d8c85" d="M762.1,697.1L569,268.5 572.7,266.9 763.6,696.4Z"/><path fill="#8a8982" d="M763.4,696.5L572.2,267.1 575.9,265.5 764.9,695.8Z"/><path fill="#888780" d="M764.7,695.9L575.4,265.7 579.1,264.1 766.2,695.2Z"/><path fill="#888780" d="M766,695.3L578.6,264.3 582.3,262.7 767.5,694.7Z"/><path fill="#87867f" d="M767.3,694.7L581.8,262.9 585.5,261.3 768.9,694.1Z"/><path fill="#84837c" d="M768.7,694.2L585,261.5 588.7,260 770.2,693.5Z"/><path fill="#818079" d="M770,693.6L588.2,260.2 591.9,258.6 771.5,693Z"/><path fill="#7e7d76" d="M771.3,693.1L591.5,258.8 595.2,257.3 772.8,692.4Z"/><path fill="#7a7972" d="M772.6,692.5L594.7,257.5 598.4,256 774.2,691.9Z"/><path fill="#77766f" d="M774,692L597.9,256.2 601.6,254.7 775.5,691.4Z"/><path fill="#74736c" d="M775.3,691.4L601.2,254.9 604.9,253.4 776.9,690.8Z"/><path fill="#717069" d="M776.7,690.9L604.4,253.6 608.1,252.1 778.2,690.3Z"/><path fill="#706f68" d="M778,690.4L607.7,252.3 611.4,250.9 779.5,689.8Z"/><path fill="#706f68" d="M779.3,689.9L610.9,251.1 614.7,249.6 780.9,689.3Z"/><path fill="#6f6e67" d="M780.7,689.3L614.2,249.8 617.9,248.4 782.2,688.8Z"/><path fill="#6e6d66" d="M782,688.8L617.4,248.6 621.2,247.2 783.6,688.3Z"/><path fill="#6d6c65" d="M783.4,688.3L620.7,247.4 624.5,246 784.9,687.8Z"/><path fill="#6b6a63" d="M784.7,687.8L624,246.2 627.8,244.8 786.3,687.3Z"/><path fill="#696861" d="M786.1,687.4L627.3,245 631.1,243.7 787.6,686.8Z"/><path fill="#67655f" d="M787.4,686.9L630.6,243.8 634.3,242.5 789,686.3Z"/><path fill="#65635d" d="M788.8,686.4L633.8,242.7 637.6,241.4 790.4,685.8Z"/><path fill="#63615b" d="M790.2,685.9L637.1,241.5 640.9,240.2 791.7,685.4Z"/><path fill="#62605a" d="M791.5,685.5L640.5,240.4 644.3,239.1 793.1,684.9Z"/><path fill="#615f59" d="M792.9,685L643.8,239.3 647.6,238 794.5,684.5Z"/><path fill="#605e58" d="M794.3,684.5L647.1,238.2 650.9,236.9 795.8,684Z"/><path fill="#605e58" d="M795.6,684.1L650.4,237.1 654.2,235.9 797.2,683.6Z"/><path fill="#605e58" d="M797,683.7L653.7,236 657.5,234.8 798.6,683.1Z"/><path fill="#5f5d57" d="M798.4,683.2L657,235 660.9,233.8 799.9,682.7Z"/><path fill="#5e5c56" d="M799.7,682.8L660.4,233.9 664.2,232.7 801.3,682.3Z"/><path fill="#5d5b55" d="M801.1,682.4L663.7,232.9 667.5,231.7 802.7,681.9Z"/><path fill="#5d5a54" d="M802.5,681.9L667,231.9 670.9,230.7 804.1,681.5Z"/><path fill="#5c5953" d="M803.9,681.5L670.4,230.9 674.2,229.8 805.5,681.1Z"/><path fill="#5b5852" d="M805.3,681.1L673.7,229.9 677.6,228.8 806.8,680.7Z"/><path fill="#5a5751" d="M806.6,680.7L677.1,228.9 681,227.8 808.2,680.3Z"/><path fill="#5a5751" d="M808,680.3L680.4,228 684.3,226.9 809.6,679.9Z"/><path fill="#5a5751" d="M809.4,679.9L683.8,227 687.7,226 811,679.5Z"/><path fill="#5a5751" d="M810.8,679.6L687.2,226.1 691.1,225.1 812.4,679.1Z"/><path fill="#5a5751" d="M812.2,679.2L690.5,225.2 694.4,224.2 813.8,678.8Z"/><path fill="#5a5751" d="M813.6,678.8L693.9,224.3 697.8,223.3 815.2,678.4Z"/><path fill="#5a5752" d="M815,678.5L697.3,223.4 701.2,222.4 816.6,678Z"/><path fill="#5a5852" d="M816.4,678.1L700.7,222.6 704.6,221.6 818,677.7Z"/><path fill="#5b5852" d="M817.8,677.7L704.1,221.7 708,220.7 819.4,677.3Z"/><path fill="#5b5852" d="M819.2,677.4L707.5,220.9 711.4,219.9 820.8,677Z"/><path fill="#5b5853" d="M820.6,677.1L710.8,220 714.8,219.1 822.2,676.7Z"/><path fill="#5b5953" d="M822,676.7L714.2,219.2 718.2,218.3 823.6,676.4Z"/><path fill="#5b5954" d="M823.4,676.4L717.6,218.4 721.6,217.6 825,676Z"/><path fill="#5b5954" d="M824.8,676.1L721,217.7 725,216.8 826.4,675.7Z"/><path fill="#5c5954" d="M826.2,675.8L724.5,216.9 728.4,216 827.8,675.4Z"/><path fill="#5c5a54" d="M827.6,675.5L727.9,216.2 731.8,215.3 829.2,675.1Z"/><path fill="#5c5a55" d="M829,675.2L731.3,215.4 735.2,214.6 830.6,674.8Z"/><path fill="#5c5a55" d="M830.4,674.9L734.7,214.7 738.6,213.9 832,674.5Z"/><path fill="#5c5a55" d="M831.8,674.6L738.1,214 742,213.2 833.4,674.2Z"/><path fill="#5c5a55" d="M833.2,674.3L741.5,213.3 745.5,212.5 834.8,674Z"/><path fill="#5c5a55" d="M834.6,674L745,212.6 748.9,211.9 836.3,673.7Z"/><path fill="#5c5a55" d="M836,673.7L748.4,212 752.3,211.2 837.7,673.4Z"/><path fill="#5c5a55" d="M837.5,673.5L751.8,211.3 755.8,210.6 839.1,673.2Z"/><path fill="#5c5a55" d="M838.9,673.2L755.2,210.7 759.2,210 840.5,672.9Z"/><path fill="#5c5b56" d="M840.3,673L758.7,210.1 762.6,209.4 841.9,672.7Z"/><path fill="#5d5b56" d="M841.7,672.7L762.1,209.5 766.1,208.8 843.3,672.4Z"/><path fill="#5d5b56" d="M843.1,672.5L765.6,208.9 769.5,208.3 844.8,672.2Z"/><path fill="#5d5c57" d="M844.6,672.2L769,208.3 773,207.7 846.2,672Z"/><path fill="#5e5c57" d="M846,672L772.5,207.8 776.4,207.2 847.6,671.7Z"/><path fill="#5e5c57" d="M847.4,671.8L775.9,207.3 779.9,206.7 849,671.5Z"/><path fill="#5e5d58" d="M848.8,671.6L779.4,206.7 783.3,206.1 850.5,671.3Z"/><path fill="#5e5d58" d="M850.2,671.4L782.8,206.2 786.8,205.7 851.9,671.1Z"/><path fill="#5f5d58" d="M851.7,671.2L786.3,205.7 790.2,205.2 853.3,670.9Z"/><path fill="#5f5e59" d="M853.1,671L789.7,205.2 793.7,204.7 854.7,670.7Z"/><path fill="#5f5e59" d="M854.5,670.8L793.2,204.8 797.2,204.3 856.2,670.6Z"/><path fill="#605e59" d="M856,670.6L796.6,204.3 800.6,203.8 857.6,670.4Z"/><path fill="#605f5a" d="M857.4,670.4L800.1,203.9 804.1,203.4 859,670.2Z"/><path fill="#605f5a" d="M858.8,670.2L803.6,203.5 807.6,203 860.5,670Z"/><path fill="#605f5a" d="M860.2,670.1L807,203.1 811,202.6 861.9,669.9Z"/><path fill="#605f5a" d="M861.7,669.9L810.5,202.7 814.5,202.3 863.3,669.7Z"/><path fill="#605f5a" d="M863.1,669.7L814,202.3 818,201.9 864.8,669.6Z"/><path fill="#605f5a" d="M864.5,669.6L817.5,202 821.4,201.6 866.2,669.4Z"/><path fill="#605f5a" d="M866,669.5L820.9,201.6 824.9,201.2 867.6,669.3Z"/><path fill="#605f5a" d="M867.4,669.3L824.4,201.3 828.4,200.9 869.1,669.2Z"/><path fill="#605f5a" d="M868.8,669.2L827.9,201 831.9,200.6 870.5,669.1Z"/><path fill="#61605a" d="M870.3,669.1L831.4,200.7 835.4,200.4 871.9,668.9Z"/><path fill="#61605b" d="M871.7,669L834.8,200.4 838.8,200.1 873.4,668.8Z"/><path fill="#61605b" d="M873.1,668.8L838.3,200.1 842.3,199.9 874.8,668.7Z"/><path fill="#61605b" d="M874.6,668.7L841.8,199.9 845.8,199.6 876.2,668.6Z"/><path fill="#62615b" d="M876,668.6L845.3,199.7 849.3,199.4 877.7,668.5Z"/><path fill="#62615c" d="M877.5,668.6L848.8,199.4 852.8,199.2 879.1,668.5Z"/><path fill="#62615c" d="M878.9,668.5L852.2,199.2 856.3,199 880.5,668.4Z"/><path fill="#63625c" d="M880.3,668.4L855.7,199 859.7,198.8 882,668.3Z"/><path fill="#63625c" d="M881.8,668.3L859.2,198.9 863.2,198.7 883.4,668.2Z"/><path fill="#63625d" d="M883.2,668.3L862.7,198.7 866.7,198.5 884.9,668.2Z"/><path fill="#64635d" d="M884.6,668.2L866.2,198.6 870.2,198.4 886.3,668.1Z"/><path fill="#64635d" d="M886.1,668.1L869.7,198.4 873.7,198.3 887.7,668.1Z"/><path fill="#64635e" d="M887.5,668.1L873.2,198.3 877.2,198.2 889.2,668Z"/><path fill="#65645e" d="M889,668.1L876.7,198.2 880.7,198.1 890.6,668Z"/><path fill="#65645e" d="M890.4,668L880.2,198.1 884.2,198.1 892.1,668Z"/><path fill="#65645e" d="M891.8,668L883.6,198.1 887.7,198 893.5,668Z"/><path fill="#65645e" d="M893.3,668L887.1,198 891.1,198 894.9,668Z"/><path fill="#66655f" d="M894.7,668L890.6,198 894.6,197.9 896.4,667.9Z"/><path fill="#66655f" d="M896.2,667.9L894.1,197.9 898.1,197.9 897.8,667.9Z"/><path fill="#66655f" d="M897.6,667.9L897.6,197.9 901.6,198 899.3,667.9Z"/><path fill="#66655f" d="M899,667.9L901.1,197.9 905.1,198 900.7,668Z"/><path fill="#66655f" d="M900.5,668L904.6,198 908.6,198 902.1,668Z"/><path fill="#66655f" d="M901.9,668L908.1,198 912.1,198.1 903.6,668Z"/><path fill="#66655f" d="M903.4,668L911.6,198.1 915.6,198.1 905,668Z"/><path fill="#66655f" d="M904.8,668L915.1,198.1 919.1,198.2 906.5,668.1Z"/><path fill="#66655f" d="M906.2,668.1L918.5,198.2 922.6,198.3 907.9,668.1Z"/><path fill="#65645e" d="M907.7,668.1L922,198.3 926,198.4 909.3,668.1Z"/><path fill="#65645e" d="M909.1,668.1L925.5,198.4 929.5,198.6 910.8,668.2Z"/><path fill="#65635d" d="M910.6,668.2L929,198.6 933,198.7 912.2,668.3Z"/><path fill="#64635d" d="M912,668.3L932.5,198.7 936.5,198.9 913.7,668.3Z"/><path fill="#64635d" d="M913.4,668.3L936,198.9 940,199.1 915.1,668.4Z"/><path fill="#64625c" d="M914.9,668.4L939.5,199 943.5,199.3 916.5,668.5Z"/><path fill="#63625c" d="M916.3,668.5L943,199.2 947,199.5 918,668.6Z"/><path fill="#63615b" d="M917.7,668.6L946.4,199.4 950.4,199.7 919.4,668.7Z"/><path fill="#63615b" d="M919.2,668.6L949.9,199.7 953.9,199.9 920.8,668.8Z"/><path fill="#62615b" d="M920.6,668.7L953.4,199.9 957.4,200.2 922.3,668.9Z"/><path fill="#62605a" d="M922.1,668.8L956.9,200.1 960.9,200.4 923.7,669Z"/><path fill="#62605a" d="M923.5,669L960.4,200.4 964.4,200.7 925.1,669.1Z"/><path fill="#62605a" d="M924.9,669.1L963.8,200.7 967.8,201 926.6,669.2Z"/><path fill="#62605a" d="M926.4,669.2L967.3,201 971.3,201.3 928,669.3Z"/><path fill="#62605a" d="M927.8,669.3L970.8,201.3 974.8,201.7 929.4,669.5Z"/><path fill="#62605a" d="M929.2,669.5L974.3,201.6 978.3,202 930.9,669.6Z"/><path fill="#615f59" d="M930.7,669.6L977.8,202 981.7,202.4 932.3,669.8Z"/><path fill="#615f59" d="M932.1,669.7L981.2,202.3 985.2,202.8 933.7,669.9Z"/><path fill="#615e58" d="M933.5,669.9L984.7,202.7 988.7,203.1 935.2,670.1Z"/><path fill="#605e58" d="M935,670.1L988.2,203.1 992.2,203.5 936.6,670.3Z"/><path fill="#605d57" d="M936.4,670.2L991.6,203.5 995.6,204 938,670.4Z"/><path fill="#5f5c56" d="M937.8,670.4L995.1,203.9 999.1,204.4 939.5,670.6Z"/><path fill="#5e5b55" d="M939.2,670.6L998.6,204.3 1002.5,204.9 940.9,670.8Z"/><path fill="#5e5b55" d="M940.7,670.8L1002,204.8 1006,205.3 942.3,671Z"/><path fill="#5d5a54" d="M942.1,671L1005.5,205.2 1009.5,205.8 943.7,671.2Z"/><path fill="#5c5953" d="M943.5,671.2L1008.9,205.7 1012.9,206.3 945.2,671.4Z"/><path fill="#5c5852" d="M945,671.4L1012.4,206.2 1016.4,206.8 946.6,671.6Z"/><path fill="#5b5852" d="M946.4,671.6L1015.8,206.7 1019.8,207.3 948,671.8Z"/><path fill="#5b5751" d="M947.8,671.8L1019.3,207.3 1023.3,207.9 949.4,672Z"/><path fill="#5b5751" d="M949.2,672L1022.7,207.8 1026.7,208.4 950.9,672.3Z"/><path fill="#5a5650" d="M950.6,672.2L1026.2,208.3 1030.2,209 952.3,672.5Z"/><path fill="#5a5650" d="M952.1,672.5L1029.6,208.9 1033.6,209.6 953.7,672.7Z"/><path fill="#5a5650" d="M953.5,672.7L1033.1,209.5 1037,210.2 955.1,673Z"/><path fill="#5a5650" d="M954.9,673L1036.5,210.1 1040.5,210.8 956.5,673.2Z"/><path fill="#5a5650" d="M956.3,673.2L1040,210.7 1043.9,211.4 958,673.5Z"/><path fill="#5b5751" d="M957.7,673.5L1043.4,211.3 1047.3,212.1 959.4,673.8Z"/><path fill="#5b5752" d="M959.2,673.7L1046.8,212 1050.8,212.7 960.8,674Z"/><path fill="#5c5852" d="M960.6,674L1050.2,212.6 1054.2,213.4 962.2,674.3Z"/><path fill="#5c5953" d="M962,674.3L1053.7,213.3 1057.6,214.1 963.6,674.6Z"/><path fill="#5d5a55" d="M963.4,674.6L1057.1,214 1061,214.8 965,674.9Z"/><path fill="#5d5b56" d="M964.8,674.9L1060.5,214.7 1064.4,215.5 966.4,675.2Z"/><path fill="#5e5c56" d="M966.2,675.2L1063.9,215.4 1067.9,216.3 967.8,675.5Z"/><path fill="#5e5c57" d="M967.6,675.5L1067.3,216.2 1071.3,217 969.2,675.8Z"/><path fill="#5f5d58" d="M969,675.8L1070.8,216.9 1074.7,217.8 970.6,676.1Z"/><path fill="#5f5d58" d="M970.4,676.1L1074.2,217.7 1078.1,218.6 972,676.4Z"/><path fill="#5f5d58" d="M971.8,676.4L1077.6,218.4 1081.5,219.4 973.4,676.8Z"/><path fill="#5f5d58" d="M973.2,676.7L1081,219.2 1084.9,220.2 974.8,677.1Z"/><path fill="#605e59" d="M974.6,677.1L1084.4,220 1088.3,221 976.2,677.4Z"/><path fill="#605e59" d="M976,677.4L1087.8,220.9 1091.6,221.8 977.6,677.8Z"/><path fill="#615f5a" d="M977.4,677.7L1091.1,221.7 1095,222.7 979,678.1Z"/><path fill="#62605b" d="M978.8,678.1L1094.5,222.6 1098.4,223.6 980.4,678.5Z"/><path fill="#63615c" d="M980.2,678.5L1097.9,223.4 1101.8,224.4 981.8,678.9Z"/><path fill="#64625d" d="M981.6,678.8L1101.3,224.3 1105.2,225.3 983.2,679.2Z"/><path fill="#64635e" d="M983,679.2L1104.7,225.2 1108.5,226.2 984.6,679.6Z"/><path fill="#65645f" d="M984.4,679.6L1108,226.1 1111.9,227.2 986,680Z"/><path fill="#666560" d="M985.8,679.9L1111.4,227 1115.3,228.1 987.4,680.4Z"/><path fill="#676661" d="M987.2,680.3L1114.8,228 1118.6,229.1 988.8,680.8Z"/><path fill="#686762" d="M988.6,680.7L1118.1,228.9 1122,230 990.2,681.2Z"/><path fill="#686762" d="M989.9,681.1L1121.5,229.9 1125.3,231 991.5,681.6Z"/><path fill="#696863" d="M991.3,681.5L1124.8,230.9 1128.7,232 992.9,682Z"/><path fill="#696863" d="M992.7,681.9L1128.2,231.9 1132,233.1 994.3,682.4Z"/><path fill="#696863" d="M994.1,682.4L1131.5,232.9 1135.3,234.1 995.7,682.8Z"/><path fill="#696863" d="M995.5,682.8L1134.8,233.9 1138.7,235.1 997,683.3Z"/><path fill="#696863" d="M996.8,683.2L1138.2,235 1142,236.2 998.4,683.7Z"/><path fill="#6a6964" d="M998.2,683.7L1141.5,236 1145.3,237.3 999.8,684.2Z"/><path fill="#6a6964" d="M999.6,684.1L1144.8,237.1 1148.6,238.3 1001.2,684.6Z"/><path fill="#6b6a65" d="M1000.9,684.5L1148.1,238.2 1151.9,239.4 1002.5,685.1Z"/><path fill="#6c6b66" d="M1002.3,685L1151.4,239.3 1155.2,240.6 1003.9,685.5Z"/><path fill="#6d6c67" d="M1003.7,685.5L1154.8,240.4 1158.6,241.7 1005.2,686Z"/><path fill="#6d6c67" d="M1005,685.9L1158.1,241.5 1161.8,242.8 1006.6,686.5Z"/><path fill="#6e6d68" d="M1006.4,686.4L1161.4,242.7 1165.1,244 1008,686.9Z"/><path fill="#6f6e69" d="M1007.8,686.9L1164.6,243.8 1168.4,245.2 1009.3,687.4Z"/><path fill="#706f6a" d="M1009.1,687.4L1167.9,245 1171.7,246.4 1010.7,687.9Z"/><path fill="#706f6a" d="M1010.5,687.8L1171.2,246.2 1175,247.6 1012,688.4Z"/><path fill="#71706b" d="M1011.8,688.3L1174.5,247.4 1178.3,248.8 1013.4,688.9Z"/><path fill="#71706b" d="M1013.2,688.8L1177.8,248.6 1181.5,250 1014.7,689.4Z"/><path fill="#71706b" d="M1014.5,689.3L1181,249.8 1184.8,251.3 1016.1,689.9Z"/><path fill="#71706b" d="M1015.9,689.9L1184.3,251.1 1188,252.5 1017.4,690.5Z"/><path fill="#71716c" d="M1017.2,690.4L1187.6,252.3 1191.3,253.8 1018.7,691Z"/><path fill="#72716c" d="M1018.5,690.9L1190.8,253.6 1194.5,255.1 1020.1,691.5Z"/><path fill="#74736e" d="M1019.9,691.4L1194,254.9 1197.8,256.4 1021.4,692.1Z"/><path fill="#75746f" d="M1021.2,692L1197.3,256.2 1201,257.7 1022.8,692.6Z"/><path fill="#777671" d="M1022.6,692.5L1200.5,257.5 1204.2,259 1024.1,693.1Z"/><path fill="#787873" d="M1023.9,693.1L1203.7,258.8 1207.5,260.4 1025.4,693.7Z"/><path fill="#7a7a75" d="M1025.2,693.6L1207,260.2 1210.7,261.7 1026.7,694.3Z"/><path fill="#7b7b76" d="M1026.5,694.2L1210.2,261.5 1213.9,263.1 1028.1,694.8Z"/><path fill="#7d7d78" d="M1027.9,694.7L1213.4,262.9 1217.1,264.5 1029.4,695.4Z"/><path fill="#7e7d78" d="M1029.2,695.3L1216.6,264.3 1220.3,265.9 1030.7,696Z"/><path fill="#7e7e79" d="M1030.5,695.9L1219.8,265.7 1223.5,267.3 1032,696.6Z"/><path fill="#7e7e79" d="M1031.8,696.5L1223,267.1 1226.7,268.7 1033.3,697.1Z"/><path fill="#7f7f7a" d="M1033.1,697.1L1226.2,268.5 1229.8,270.2 1034.6,697.7Z"/><path fill="#80807b" d="M1034.5,697.7L1229.4,270 1233,271.6 1036,698.3Z"/><path fill="#82827d" d="M1035.8,698.3L1232.5,271.4 1236.2,273.1 1037.3,699Z"/><path fill="#858580" d="M1037.1,698.9L1235.7,272.9 1239.3,274.6 1038.6,699.6Z"/><path fill="#878782" d="M1038.4,699.5L1238.9,274.4 1242.5,276.1 1039.9,700.2Z"/><path fill="#8a8a85" d="M1039.7,700.1L1242,275.9 1245.6,277.6 1041.2,700.8Z"/><path fill="#8c8c87" d="M1041,700.7L1245.2,277.4 1248.8,279.1 1042.5,701.4Z"/><path fill="#8d8d88" d="M1042.3,701.3L1248.3,278.9 1251.9,280.7 1043.8,702.1Z"/><path fill="#8e8e89" d="M1043.6,702L1251.4,280.4 1255,282.2 1045,702.7Z"/><path fill="#8e8e89" d="M1044.8,702.6L1254.6,282 1258.1,283.8 1046.3,703.4Z"/><path fill="#8f8f8a" d="M1046.1,703.3L1257.7,283.6 1261.3,285.4 1047.6,704Z"/><path fill="#91918c" d="M1047.4,703.9L1260.8,285.1 1264.4,287 1048.9,704.7Z"/><path fill="#93938e" d="M1048.7,704.6L1263.9,286.7 1267.5,288.6 1050.2,705.3Z"/><path fill="#959590" d="M1050,705.2L1267,288.3 1270.6,290.2 1051.4,706Z"/><path fill="#969691" d="M1051.3,705.9L1270.1,290 1273.6,291.8 1052.7,706.7Z"/><path fill="#969691" d="M1052.5,706.6L1273.2,291.6 1276.7,293.5 1054,707.3Z"/><path fill="#969691" d="M1053.8,707.2L1276.3,293.2 1279.8,295.1 1055.3,708Z"/><path fill="#969691" d="M1055.1,707.9L1279.3,294.9 1282.9,296.8 1056.5,708.7Z"/><path fill="#969691" d="M1056.3,708.6L1282.4,296.6 1285.9,298.5 1057.8,709.4Z"/><path fill="#969691" d="M1057.6,709.3L1285.4,298.2 1289,300.2 1059,710.1Z"/><path fill="#969691" d="M1058.8,710L1288.5,299.9 1292,301.9 1060.3,710.8Z"/><path fill="#969691" d="M1060.1,710.7L1291.5,301.7 1295,303.6 1061.5,711.5Z"/><path fill="#969691" d="M1061.4,711.4L1294.6,303.4 1298.1,305.4 1062.8,712.3Z"/></g>
<circle r="67" transform="matrix(2.245,-0.97996,1.3058,1.74278,907.2,599.8)" vector-effect="non-scaling-stroke" fill="#77766f"/>
<g clip-path="url(#cpF1)">
<circle r="66.7" transform="matrix(2.245,-0.97996,1.3058,1.74278,907.3,600.1)" vector-effect="non-scaling-stroke" fill="none" stroke="#7a7d7a" stroke-width="3.1"/><circle r="66.2" transform="matrix(2.245,-0.97996,1.3058,1.74278,907.3,600.8)" vector-effect="non-scaling-stroke" fill="none" stroke="#7b7d7a" stroke-width="3.1"/><circle r="65.6" transform="matrix(2.245,-0.97996,1.3058,1.74278,907.3,601.5)" vector-effect="non-scaling-stroke" fill="none" stroke="#7b7e7b" stroke-width="3.1"/><circle r="65" transform="matrix(2.245,-0.97996,1.3058,1.74278,907.3,602.2)" vector-effect="non-scaling-stroke" fill="none" stroke="#7c7e7b" stroke-width="3.1"/><circle r="64.5" transform="matrix(2.245,-0.97996,1.3058,1.74278,907.4,602.9)" vector-effect="non-scaling-stroke" fill="none" stroke="#7c7e7b" stroke-width="3.1"/><circle r="63.9" transform="matrix(2.245,-0.97996,1.3058,1.74278,907.4,603.6)" vector-effect="non-scaling-stroke" fill="none" stroke="#7d7f7b" stroke-width="3.1"/><circle r="63.4" transform="matrix(2.245,-0.97996,1.3058,1.74278,907.4,604.3)" vector-effect="non-scaling-stroke" fill="none" stroke="#7f807b" stroke-width="3.1"/><circle r="62.8" transform="matrix(2.245,-0.97996,1.3058,1.74278,907.4,605)" vector-effect="non-scaling-stroke" fill="none" stroke="#80807b" stroke-width="3.1"/><circle r="62.3" transform="matrix(2.245,-0.97996,1.3058,1.74278,907.4,605.8)" vector-effect="non-scaling-stroke" fill="none" stroke="#81807b" stroke-width="3.1"/><circle r="61.7" transform="matrix(2.245,-0.97996,1.3058,1.74278,907.5,606.4)" vector-effect="non-scaling-stroke" fill="none" stroke="#83827c" stroke-width="3.1"/><circle r="61.1" transform="matrix(2.245,-0.97996,1.3058,1.74278,907.5,607.1)" vector-effect="non-scaling-stroke" fill="none" stroke="#86857d" stroke-width="3.1"/><circle r="60.6" transform="matrix(2.245,-0.97996,1.3058,1.74278,907.5,607.9)" vector-effect="non-scaling-stroke" fill="none" stroke="#88867e" stroke-width="3.1"/><circle r="60" transform="matrix(2.245,-0.97996,1.3058,1.74278,907.5,608.5)" vector-effect="non-scaling-stroke" fill="none" stroke="#8a887f" stroke-width="3.1"/><circle r="59.5" transform="matrix(2.245,-0.97996,1.3058,1.74278,907.6,609.2)" vector-effect="non-scaling-stroke" fill="none" stroke="#918e84" stroke-width="3.1"/><circle r="58.9" transform="matrix(2.245,-0.97996,1.3058,1.74278,907.6,609.9)" vector-effect="non-scaling-stroke" fill="none" stroke="#979388" stroke-width="3.1"/><circle r="58.4" transform="matrix(2.245,-0.97996,1.3058,1.74278,907.6,610.6)" vector-effect="non-scaling-stroke" fill="none" stroke="#99958a" stroke-width="3.1"/><circle r="57.8" transform="matrix(2.245,-0.97996,1.3058,1.74278,907.6,611.4)" vector-effect="non-scaling-stroke" fill="none" stroke="#a19c90" stroke-width="3.1"/><circle r="57.2" transform="matrix(2.245,-0.97996,1.3058,1.74278,907.7,612)" vector-effect="non-scaling-stroke" fill="none" stroke="#aaa597" stroke-width="3.1"/><circle r="56.7" transform="matrix(2.245,-0.97996,1.3058,1.74278,907.7,612.8)" vector-effect="non-scaling-stroke" fill="none" stroke="#aca799" stroke-width="3.1"/><circle r="56.1" transform="matrix(2.245,-0.97996,1.3058,1.74278,907.7,613.5)" vector-effect="non-scaling-stroke" fill="none" stroke="#aaa496" stroke-width="3.1"/><circle r="55.6" transform="matrix(2.245,-0.97996,1.3058,1.74278,907.7,614.1)" vector-effect="non-scaling-stroke" fill="none" stroke="#a7a193" stroke-width="3.1"/><circle r="55" transform="matrix(2.245,-0.97996,1.3058,1.74278,907.7,614.9)" vector-effect="non-scaling-stroke" fill="none" stroke="#a6a092" stroke-width="3.1"/><circle r="54.5" transform="matrix(2.245,-0.97996,1.3058,1.74278,907.8,615.5)" vector-effect="non-scaling-stroke" fill="none" stroke="#a39d8f" stroke-width="3.1"/><circle r="53.9" transform="matrix(2.245,-0.97996,1.3058,1.74278,907.8,616.2)" vector-effect="non-scaling-stroke" fill="none" stroke="#a0998b" stroke-width="3.1"/><circle r="53.3" transform="matrix(2.245,-0.97996,1.3058,1.74278,907.8,617)" vector-effect="non-scaling-stroke" fill="none" stroke="#9f988a" stroke-width="3.1"/><circle r="52.8" transform="matrix(2.245,-0.97996,1.3058,1.74278,907.8,617.6)" vector-effect="non-scaling-stroke" fill="none" stroke="#9d9688" stroke-width="3.1"/>
<path d="M1009.9,502.5L1014.6,505.5 1019.1,508.6 1023.6,511.8 1027.8,515.1 1031.9,518.6 1035.9,522.1 1039.6,525.8 1043.2,529.6 1046.7,533.4 1049.9,537.4 1053,541.4 1055.8,545.5 1058.5,549.7 1061,554 1063.3,558.3 1065.4,562.7 1067.2,567.1 1068.9,571.6 1070.4,576.1 1071.6,580.7 1072.6,585.3 1073.4,589.9 1074,594.5 1074.4,599.1 1074.6,603.8 1074.5,608.4 1074.3,613.1 1073.8,617.7 1073.1,622.3 1072.1,626.9" fill="none" stroke="#555651" stroke-opacity="0.6" stroke-width="9" filter="url(#b4)"/>
<path d="M755,656L752.7,652 750.6,648 748.6,644 746.8,639.9 745.2,635.7 743.8,631.6 742.6,627.4 741.5,623.1 740.7,618.9 740,614.6 739.5,610.3 739.1,606 739,601.7 739,597.4 739.3,593.1 739.7,588.9 740.3,584.6 741.1,580.4 742,576.1 743.2,571.9 744.5,567.8 746,563.7 747.7,559.6 749.6,555.6 751.6,551.6 753.8,547.6 756.2,543.8 758.7,540 761.4,536.3 764.3,532.6" fill="none" stroke="#5c5e5b" stroke-opacity="0.5" stroke-width="8" filter="url(#b4)"/>
<path d="M837.9,497.8L842.4,496.3 846.9,494.8 851.5,493.4 856.2,492.2 860.9,491 865.6,490 870.4,489.1 875.3,488.3 880.1,487.7 885,487.1 890,486.7 894.9,486.4 899.8,486.2 904.8,486.1 909.8,486.2 914.7,486.4 919.7,486.6 924.6,487.1 929.5,487.6 934.4,488.2 939.3,489 944.1,489.9 948.9,490.9 953.7,492 958.4,493.2 963.1,494.5 967.7,496 972.2,497.6 976.7,499.2 981.1,501" fill="none" stroke="#58554e" stroke-opacity="0.8" stroke-width="5.5" stroke-linecap="round" filter="url(#b4)"/>
<path d="M782.2,551.2L786.2,546.6 790.4,542.2 794.9,537.9 799.7,533.8 804.8,529.9 810.1,526.2 815.6,522.7 821.3,519.4 827.3,516.3 833.4,513.5 839.8,510.9 846.2,508.5 852.9,506.4 859.6,504.5 866.5,502.9 873.5,501.6 880.5,500.5 887.7,499.7 894.8,499.2 902,498.9 909.3,498.9 916.5,499.2 923.7,499.7 930.8,500.5 937.9,501.6 944.9,503 951.9,504.6 958.7,506.5 965.4,508.6 972,511 978.4,513.6 984.6,516.4 990.7,519.5 996.6,522.8 1002.2,526.3 1007.6,530 1012.8,533.9 1017.8,538 1022.4,542.3 1026.8,546.8" fill="none" stroke="#e4dfcf" stroke-opacity="0.45" stroke-width="7" stroke-linecap="round" filter="url(#b4)"/>
<path d="M861.6,504L864.7,503.3 867.8,502.7 871,502 874.2,501.5 877.3,501 880.5,500.5 883.8,500.1 887,499.8 890.2,499.5 893.5,499.3 896.7,499.1 900,499 903.2,498.9 906.5,498.9 909.8,498.9 913,499 916.3,499.2 919.6,499.4 922.8,499.7 926,500 929.3,500.4 932.5,500.8 935.7,501.3 938.9,501.8 942.1,502.4 945.3,503.1 948.4,503.8 951.5,504.5 954.6,505.3 957.7,506.2" fill="none" stroke="#ffffff" stroke-width="6.5" stroke-linecap="round" filter="url(#b2)"/>
<path d="M871.5,501.9L874,501.5 876.5,501.1 879,500.7 881.6,500.4 884.1,500.1 886.7,499.8 889.2,499.6 891.8,499.4 894.3,499.2 896.9,499.1 899.5,499 902,498.9 904.6,498.9 907.2,498.9 909.8,498.9 912.3,499 914.9,499.1 917.5,499.2 920.1,499.4 922.6,499.6 925.2,499.9 927.7,500.2 930.3,500.5 932.8,500.8 935.4,501.2 937.9,501.6 940.4,502.1 942.9,502.6 945.4,503.1 947.9,503.6" fill="none" stroke="#ffffff" stroke-opacity="0.9" stroke-width="3" stroke-linecap="round" filter="url(#b1)"/>
</g>
<circle r="52.5" transform="matrix(2.245,-0.97996,1.3058,1.74278,907.9,618)" vector-effect="non-scaling-stroke" fill="url(#gFloor)"/>
<circle r="67" transform="matrix(2.245,-0.97996,1.3058,1.74278,907.2,599.8)" vector-effect="non-scaling-stroke" fill="none" stroke="#050505" stroke-width="1.15"/>
<circle r="52.5" transform="matrix(2.245,-0.97996,1.3058,1.74278,907.9,618)" vector-effect="non-scaling-stroke" fill="none" stroke="#050505" stroke-width="1.15"/>
</g>
<circle r="98.2" transform="matrix(2.245,-0.97996,1.3058,1.74278,911.8,414.1)" vector-effect="non-scaling-stroke" fill="none" stroke="#050505" stroke-width="1.2"/>
<circle r="100.1" transform="matrix(2.245,-0.97996,1.3058,1.74278,911.8,414.1)" vector-effect="non-scaling-stroke" fill="none" stroke="#050505" stroke-width="1.2"/>
<path d="M1155.3,337.1L1157.6,341.3 1159.9,345.5 1162,349.8 1164,354.1 1165.8,358.4 1167.6,362.8 1169.2,367.1 1170.7,371.5 1172.1,376 1173.3,380.4 1174.4,384.9 1175.4,389.4 1176.3,393.9 1177,398.4 1177.6,402.9 1178.1,407.4 1178.4,412 1178.6,416.5 1178.7,421.1 1178.7,425.6 1178.5,430.1 1178.2,434.7 1177.7,439.2 1177.2,443.7 1176.5,448.2 1175.6,452.7 1174.7,457.2 1173.6,461.6 1172.4,466 1171,470.4 1169.6,474.8 1168,479.2 1166.3,483.5 1164.4,487.8 1162.5,492 1160.4,496.3 1158.2,500.5 1155.8,504.6 1153.4,508.7 1150.8,512.8 1148.1,516.8 1145.3,520.7 1142.4,524.7 1139.4,528.5 1136.3,532.3 1133,536.1 1129.7,539.8 1126.2,543.4 1122.7,547 1119,550.5 1115.2,554 1111.4,557.3 1107.4,560.7 1103.3,563.9 1099.2,567.1 1094.9,570.2 1090.6,573.2 1086.2,576.2 1081.7,579.1 1077.1,581.9 1072.4,584.6 1067.7,587.2 1062.9,589.8 1058,592.2 1053,594.6 1048,596.9 1042.8,599.2 1037.7,601.3 1032.4,603.3 1027.2,605.3 1021.8,607.1 1016.4,608.9 1011,610.6 1005.5,612.2 999.9,613.6 994.3,615 988.7,616.3 983,617.5 977.3,618.6 971.6,619.6 965.9,620.5 960.1,621.3 954.3,622.1 948.4,622.7 942.6,623.2 936.7,623.6 930.8,623.9 924.9,624.1 919.1,624.2 913.2,624.2 907.3,624.1 901.4,624 895.5,623.7 889.6,623.3 883.7,622.8 877.9,622.2 872,621.5 866.2,620.7 860.4,619.8 854.6,618.8" fill="none" stroke="#050505" stroke-width="1.4"/>
<path d="M675.3,320C674.7,321 672.7,323.9 671.5,325.8C670.2,327.8 669,329.8 667.9,331.7C666.7,333.7 665.6,335.7 664.5,337.8C663.4,339.8 662.4,341.8 661.4,343.8C660.4,345.9 659.4,347.9 658.5,350C657.6,352.1 656.7,354.2 655.9,356.2C655.1,358.3 654.3,360.4 653.6,362.5C652.8,364.7 652.1,366.8 651.5,368.9C650.8,371 650.2,373.2 649.7,375.3C649.1,377.5 648.6,379.6 648.1,381.8C647.7,383.9 647.2,386.1 646.9,388.3C646.5,390.4 646,392.8 645.9,394.8C645.7,396.7 645.6,397.9 645.8,400C646,402.1 646.5,403.9 647.2,407.4C647.9,410.9 649,416.8 650,420.8C651,424.8 652.2,428.1 652.9,431.5C653.6,434.9 653.8,438.8 654.2,441.5C654.7,444.2 655.1,445.7 655.6,447.8C656.1,449.9 656.7,452 657.3,454.1C657.9,456.2 658.9,459.4 659.2,460.4" fill="none" stroke="#050505" stroke-width="1.2"/>
<path d="M1085.1,654.2L1083.3,657.9 1081.3,661.6 1079.2,665.2 1076.9,668.8 1074.6,672.3 1072.1,675.8 1069.5,679.2 1066.7,682.6 1063.9,685.9 1060.9,689.2 1057.8,692.3 1054.6,695.5 1051.3,698.5 1047.9,701.5 1044.4,704.4 1040.7,707.2 1037,710 1033.2,712.6 1029.3,715.2 1025.3,717.7 1021.2,720.1 1017,722.5 1012.7,724.7 1008.4,726.8 1004,728.9 999.5,730.9 994.9,732.7 990.3,734.5 985.6,736.2 980.8,737.7 976,739.2 971.2,740.6 966.3,741.8 961.3,743 956.3,744.1 951.3,745 946.2,745.8 941.1,746.6 936,747.2 930.9,747.7 925.7,748.2 920.5,748.5 915.3,748.7 910.1,748.8 904.9,748.7 899.7,748.6 894.5,748.4 889.4,748 884.2,747.6 879,747 873.9,746.3 868.8,745.6 863.7,744.7 858.6,743.7 853.6,742.6 848.6,741.4 843.7,740.1 838.8,738.7 834,737.2 829.2,735.6" fill="none" stroke="#050505" stroke-width="1.45" stroke-linecap="round"/>
<path d="M1162.5,492L1085.1,654.2" stroke="#4c4b46" stroke-width="0.6"/>
</g>
<g id="viewcube">
<defs><filter id="vcb" x="-50%" y="-50%" width="200%" height="200%"><feGaussianBlur stdDeviation="5"/></filter><linearGradient id="vcF" x1="0" y1="0" x2="0" y2="1"><stop offset="0" stop-color="#f0f0f0"/><stop offset="1" stop-color="#dcdcdc"/></linearGradient></defs>
<path d="M1824,72L1850,108L1892,90L1896,60Z" fill="#9a9a9a" fill-opacity="0.55" filter="url(#vcb)"/>
<path d="M1823.4,40.0L1865.6,24.3L1892.5,55.0L1846.6,74.0Z" fill="#ededed"/>
<path d="M1823.4,40.0L1846.6,74.0L1847.2,104.0L1824.4,70.0Z" fill="#e2e2e2"/>
<path d="M1846.6,74.0L1892.5,55.0L1887.4,85.0L1847.2,104.0Z" fill="url(#vcF)"/>
<path d="M1841.6,66.6L1849.6,63.4L1856,68.4L1854.6,76.4L1848.2,78.4Z" fill="#d4d6dc" fill-opacity="0.8"/>
<path d="M1823.4,40.0L1865.6,24.3L1892.5,55.0L1846.6,74.0Z" fill="none" stroke="#808080" stroke-width="0.75" stroke-dasharray="3.5,2.2"/>
<path d="M1823.4,40.0L1824.4,70.0L1847.2,104.0L1846.6,74.0" fill="none" stroke="#808080" stroke-width="0.75" stroke-dasharray="3.5,2.2"/>
<text transform="matrix(-0.48,0.179,-0.33,-0.49,1864,42.6)" font-family="Liberation Sans, sans-serif" font-size="17" font-weight="bold" fill="#a3a7b0">TOP</text>
<text transform="matrix(0.62,-0.285,-0.06,0.72,1858.4,88.2)" font-family="Liberation Sans, sans-serif" font-size="11.5" font-weight="bold" fill="#a3a7b0">BACK</text>
<text transform="matrix(0.42,0.66,-0.02,0.8,1827.6,66)" font-family="Liberation Sans, sans-serif" font-size="10" font-weight="bold" fill="#8f939c">RIGHT</text>
<path d="M1841.8,107.8L1887.4,85" stroke="#f27676" stroke-width="1.9"/><path d="M1887.4,85L1895,51" stroke="#72f072" stroke-width="2"/>
<text x="1830.2" y="116" font-family="Liberation Sans, sans-serif" font-size="13.5" fill="#f58888" textLength="8.4" lengthAdjust="spacingAndGlyphs">X</text>
<text x="1892" y="47" font-family="Liberation Sans, sans-serif" font-size="13.5" fill="#7df47d" textLength="8" lengthAdjust="spacingAndGlyphs">Y</text>
</g></svg>
<div class="tb">
<div class="grip" style="left:6px"></div><div class="grip" style="left:10px"></div>
<div class="model">MODEL</div><div class="arr" style="left:91.2px;top:35.4px"></div>
<div class="sep" style="left:127.0px"></div>
<div class="sep" style="left:446.0px"></div>
<div class="sep" style="left:762.5px"></div>
<div class="sep" style="left:978.0px"></div>
<div class="sep" style="left:1088.0px"></div>
<div class="sep" style="left:1200.8px"></div>
<div class="sep" style="left:1306.7px"></div>
<div class="sep" style="left:1399.0px"></div>
<div class="sep" style="left:1484.0px"></div>
<div class="sep" style="left:1555.0px"></div>
<div class="sep" style="left:1647.0px"></div>
<div class="lbl" style="left:257.6px;letter-spacing:-0.30px">SKETCH</div>
<div class="arr" style="left:312.7px;top:62.6px"></div>
<div class="lbl" style="left:575.3px;letter-spacing:-0.39px">CREATE</div>
<div class="arr" style="left:630.2px;top:62.6px"></div>
<div class="lbl" style="left:841.3px;letter-spacing:-0.21px">MODIFY</div>
<div class="arr" style="left:894.3px;top:62.6px"></div>
<div class="lbl" style="left:993.0px;letter-spacing:0.14px">ASSEMBLE</div>
<div class="arr" style="left:1068.5px;top:62.6px"></div>
<div class="lbl" style="left:1103.5px;letter-spacing:-0.46px">CONSTRUCT</div>
<div class="arr" style="left:1185.2px;top:62.6px"></div>
<div class="lbl" style="left:1216.3px;letter-spacing:-0.33px">GENERATE</div>
<div class="arr" style="left:1290.2px;top:62.6px"></div>
<div class="lbl" style="left:1322.3px;letter-spacing:-0.27px">INSPECT</div>
<div class="arr" style="left:1381.3px;top:62.6px"></div>
<div class="lbl" style="left:1414.2px;letter-spacing:-0.36px">INSERT</div>
<div class="arr" style="left:1463.8px;top:62.6px"></div>
<div class="lbl" style="left:1499.4px;letter-spacing:-0.32px">MAKE</div>
<div class="arr" style="left:1540.0px;top:62.6px"></div>
<div class="lbl" style="left:1570.0px;letter-spacing:-0.16px">ADD-INS</div>
<div class="arr" style="left:1626.0px;top:62.6px"></div>
<div class="lbl" style="left:1662.5px;letter-spacing:-0.29px">SELECT</div>
<div class="arr" style="left:1716.0px;top:62.6px"></div>
<svg class="ico" style="left:-4px;top:-4px" width="1742" height="82" viewBox="0 0 1742 82">
<defs>
<linearGradient id="gG" x1="0" y1="0" x2="0" y2="1"><stop offset="0" stop-color="#ffffff"/><stop offset="1" stop-color="#a4abc0"/></linearGradient>
<linearGradient id="gG2" x1="0" y1="0" x2="0" y2="1"><stop offset="0" stop-color="#e4e6ec"/><stop offset="1" stop-color="#a9afc2"/></linearGradient>
<linearGradient id="gB" x1="0" y1="0" x2="0" y2="1"><stop offset="0" stop-color="#a9c4e4"/><stop offset="1" stop-color="#9bb8dc"/></linearGradient>
<linearGradient id="gBd" x1="0" y1="0" x2="0" y2="1"><stop offset="0" stop-color="#86a4cf"/><stop offset="1" stop-color="#6b8cbc"/></linearGradient>
<linearGradient id="gBl" x1="0" y1="0" x2="0" y2="1"><stop offset="0" stop-color="#d3e2f3"/><stop offset="1" stop-color="#bcd2ec"/></linearGradient>
<linearGradient id="gP" x1="0" y1="0" x2="0" y2="1"><stop offset="0" stop-color="#e3cdf5"/><stop offset="1" stop-color="#c48ee8"/></linearGradient>
<linearGradient id="gSky" x1="0" y1="0" x2="0" y2="1"><stop offset="0" stop-color="#b4d6f0"/><stop offset="1" stop-color="#eef5fb"/></linearGradient>
<linearGradient id="gY" x1="0" y1="0" x2="0" y2="1"><stop offset="0" stop-color="#fbe27a"/><stop offset="1" stop-color="#f2bd2a"/></linearGradient>
<linearGradient id="gPr" x1="0" y1="0" x2="0" y2="1"><stop offset="0" stop-color="#ffffff"/><stop offset="1" stop-color="#c2c3c8"/></linearGradient>
<radialGradient id="gSph" cx="0.4" cy="0.35" r="0.7"><stop offset="0" stop-color="#fff" stop-opacity="0.28"/><stop offset="1" stop-color="#fff" stop-opacity="0"/></radialGradient>
<filter id="sh" x="-20%" y="-20%" width="140%" height="150%"><feGaussianBlur in="SourceAlpha" stdDeviation="0.7"/><feOffset dy="0.8"/><feComponentTransfer><feFuncA type="linear" slope="0.35"/></feComponentTransfer><feMerge><feMergeNode/><feMergeNode in="SourceGraphic"/></feMerge></filter>
</defs>
<g filter="url(#sh)">
<rect x="148.2" y="15.3" width="26.5" height="26.4" rx="1.6" fill="url(#gG)" stroke="#333" stroke-width="1.3"/>
<path d="M151.6,18.2V38.3H163.5" fill="none" stroke="#3c3c3c" stroke-width="1.1"/><rect x="151.2" y="35.2" width="3.6" height="3.6" fill="#4a90e0" stroke="#2b5fb0" stroke-width="0.5"/>
<g transform="translate(160.6,28.6) rotate(-42.3)"><path d="M0,0L3.6,-2.1H17Q17.8,-2.1 17.8,-1.3V1.3Q17.8,2.1 17,2.1H3.6Z" fill="#fff" stroke="#2e2e2e" stroke-width="1"/><rect x="4" y="-1.55" width="10.4" height="3.1" fill="#f5bd12"/><rect x="4" y="-0.6" width="10.4" height="1" fill="#fde98c"/><rect x="14.4" y="-1.6" width="3" height="3.2" fill="#c98a54"/><path d="M0,0l1.5,-0.85v1.7z" fill="#222"/></g>
<path d="M168.5,31.5h3.2v4h4v3.2h-4v4h-3.2v-4h-4v-3.2h4z" fill="#fff" stroke="#2a2a2a" stroke-width="1"/>
</g>
<path d="M200.9,37.1H217A11.8,8.5 0 0 0 217,20.1" fill="none" stroke="#3a3a3a" stroke-width="1.2"/>
<rect x="198.8" y="35.0" width="4.2" height="4.2" fill="#3366cc"/>
<rect x="214.9" y="35.0" width="4.2" height="4.2" fill="#3366cc"/>
<rect x="214.9" y="18.0" width="4.2" height="4.2" fill="#3366cc"/>
<rect filter="url(#sh)" x="252.3" y="20.5" width="27.3" height="17" fill="url(#gG)" stroke="#333" stroke-width="1.3"/>
<rect x="277" y="18.9" width="4.2" height="4.2" fill="#3366cc"/><rect x="250.8" y="35" width="4.2" height="4.2" fill="#3366cc"/>
<circle filter="url(#sh)" cx="318" cy="27.8" r="14.5" fill="url(#gG)" stroke="#3e3e3e" stroke-width="1.3"/>
<path d="M307.6,38.1L329,17" stroke="#222" stroke-width="0.9"/><path d="M316,27.8h4M318,25.8v4" stroke="#222" stroke-width="0.7"/><rect x="327.2" y="14.9" width="4.2" height="4.2" fill="#2a4fc0"/>
<circle cx="369.4" cy="28.4" r="10.4" fill="none" stroke="#b4b4b4" stroke-width="1"/>
<rect x="365.3" y="14.3" width="8.2" height="8.2" rx="1" fill="url(#gPr)" stroke="#9a9a9a" stroke-width="0.9"/>
<rect x="355.4" y="24.4" width="8.2" height="8.2" rx="1" fill="#c7d8ec" stroke="#8e9cb8" stroke-width="0.9"/>
<rect x="375.5" y="24.4" width="8.2" height="8.2" rx="1" fill="#c7d8ec" stroke="#8e9cb8" stroke-width="0.9"/>
<rect x="365.3" y="34.4" width="8.2" height="8.2" rx="1" fill="#c7d8ec" stroke="#8e9cb8" stroke-width="0.9"/>
<path d="M407.4,15V42.8M436.6,15V42.8M408.5,24.6H435.5" stroke="#8c8c8c" stroke-width="1.1" fill="none"/><path d="M408,24.6l3,-2v4zM436,24.6l-3,-2v4z" fill="#8c8c8c"/>
<g filter="url(#sh)" stroke="#24365e" stroke-width="1" stroke-linejoin="round">
<path d="M465.2,18.6L469.9,13.3H487.8L482.7,18.6Z" fill="url(#gBl)"/>
<path d="M482.7,18.6L487.8,13.3V37.3L482.7,42.4Z" fill="url(#gBd)"/>
<rect x="465.2" y="18.6" width="17.5" height="23.8" fill="url(#gB)"/>
<path d="M465.2,38.6H482.7L487.8,33.6V37.3L482.7,42.4H465.2Z" fill="#c9cdd9" stroke="#333"/>
</g>
<path d="M492.5,39.8V18.5" stroke="#2a2a2a" stroke-width="1.1"/><path d="M492.5,16.6l-2.4,3.6h4.8z" fill="#2a2a2a"/>
<g filter="url(#sh)" stroke="#24365e" stroke-width="1" stroke-linejoin="round">
<path d="M517.2,27.2C521,19.5 543,19.5 546.5,26.6L540.6,31.6C536,28 527,28 524.3,32.5Z" fill="url(#gBl)"/>
<path d="M517.2,27.2L524.3,32.5V41.6L517.2,36.3Z" fill="url(#gBd)"/>
<path d="M524.3,32.5C527,28 536,28 540.6,31.6V41.2C536,38 527,38 524.3,41.6Z" fill="url(#gB)"/>
<path d="M540.6,31.6L546.5,26.6V36.2L540.6,41.2Z" fill="url(#gPr)" stroke="#222"/>
</g>
<path d="M545.6,18.4C538,14 527,14 519.5,17.6" fill="none" stroke="#333" stroke-width="0.9"/><path d="M516.6,19l4.6,-3.2l0.6,3.8z" fill="#333"/>
<g filter="url(#sh)" stroke="#24365e" stroke-width="1" stroke-linejoin="round">
<path d="M569.2,22.5L577.3,13.4H587.5V20.4H594.6C598.2,20.4 598.6,23 598.6,25L590,34.2H579.8V33.4H573C569.6,33.4 569.2,31 569.2,29Z" fill="url(#gBl)"/>
<path d="M581.2,20.4L587.5,13.4V20.4Z" fill="url(#gBd)"/>
<path d="M573.6,26.2H585L579.8,33.4H573.6Z" fill="url(#gB)"/>
<path d="M590,34.2L598.6,25V33L590,42.2Z" fill="url(#gBd)"/>
<rect x="579.8" y="33" width="10.2" height="9.4" fill="url(#gPr)" stroke="#222"/>
</g>
<g filter="url(#sh)" stroke-width="0.9" stroke-linejoin="round">
<path d="M622.2,17.8L627,14.6L633.4,19.4V30L629.6,32.6V38.4L626.4,40.8H622.2Z" fill="url(#gPr)" stroke="#222"/>
<path d="M622.2,17.8L626.4,19.6V40.8" fill="none" stroke="#222" stroke-width="0.7"/>
<path d="M648.7,17.4L645.4,14.4L637.4,21.5V31.6L641.4,33.2V39.2L644,40.6H648.7Z" fill="url(#gB)" stroke="#24365e"/>
<path d="M645.4,14.4L639.6,22.5V32.6" fill="none" stroke="#24365e" stroke-width="0.7"/>
</g>
<path d="M635.4,13V42.8" stroke="#333" stroke-width="1"/>
<path d="M691.6,18.6L699,25M677,33.6L684.4,39.8M691.6,39.8L698.6,33.2M684,19.6L678.4,24.6" fill="none" stroke="#1c1c1c" stroke-width="1"/>
<g filter="url(#sh)">
<g stroke="#222" stroke-width="0.8" stroke-linejoin="round"><path d="M683.4,16.4h7.5v7.5h-7.5z" fill="url(#gG2)"/><path d="M683.4,16.4l2.1,-2.1h7.5l-2.1,2.1z" fill="#eceef2"/><path d="M690.9,16.4l2.1,-2.1v7.5l-2.1,2.1z" fill="#9aa0b2"/></g>
<g stroke="#24365e" stroke-width="0.8" stroke-linejoin="round"><path d="M672.9,26.2h7.8v7.8h-7.8z" fill="url(#gB)"/><path d="M672.9,26.2l2.2,-2.2h7.8l-2.2,2.2z" fill="url(#gBl)"/><path d="M680.7,26.2l2.2,-2.2v7.8l-2.2,2.2z" fill="url(#gBd)"/></g>
<g stroke="#24365e" stroke-width="0.8" stroke-linejoin="round"><path d="M693.2,26.2h7.8v7.8h-7.8z" fill="url(#gB)"/><path d="M693.2,26.2l2.2,-2.2h7.8l-2.2,2.2z" fill="url(#gBl)"/><path d="M701.0,26.2l2.2,-2.2v7.8l-2.2,2.2z" fill="url(#gBd)"/></g>
<g stroke="#24365e" stroke-width="0.8" stroke-linejoin="round"><path d="M683.0,36.4h7.8v7.8h-7.8z" fill="url(#gB)"/><path d="M683.0,36.4l2.2,-2.2h7.8l-2.2,2.2z" fill="url(#gBl)"/><path d="M690.8,36.4l2.2,-2.2v7.8l-2.2,2.2z" fill="url(#gBd)"/></g>
</g>
<g filter="url(#sh)"><path d="M724.8,22C724.8,15 727,13 736,13H742C749,13 751,15.5 751,22V31C751,37 749,39.3 742,39.3H734C727,39.3 724.8,37 724.8,31Z" fill="url(#gP)" stroke="#8a4fb8" stroke-width="1"/>
<path d="M725.5,20.5C733,19.5 740,20 745.5,21.2M725,26.5H745.5M725.5,32.8H745.5M731.6,20V39M738.6,20.3V39M745.5,21.2V38.6M745.5,21.2C748,19 749.6,17.2 750.4,16M731.6,20C734,17.5 737,15 739,13.6M738.6,20.3C741,18 744,15.4 746,14.2M728,17C735,15.6 742,16 748.4,18" fill="none" stroke="#7d3fa8" stroke-width="0.8"/></g>
<rect x="746.3" y="32.6" width="8.6" height="9.8" fill="#f6f6f6" stroke="#333" stroke-width="1"/><path d="M747.6,36.6h3.2v-2l3.2,2.9l-3.2,2.9v-2h-3.2z" fill="#222"/>
<g filter="url(#sh)" stroke-linejoin="round" stroke-width="1">
<path d="M783.2,20.5L790.2,13.5H797V42.4H783.2Z" fill="url(#gPr)" stroke="#222"/>
<path d="M788.7,20.5L795.7,13.5H809.4L801.6,20.5Z" fill="url(#gBl)" stroke="#24365e"/>
<path d="M801.6,20.5L809.4,13.5V34.6L801.6,42.4Z" fill="url(#gBd)" stroke="#24365e"/>
<rect x="788.7" y="20.5" width="12.9" height="21.9" fill="url(#gB)" stroke="#24365e"/>
</g>
<path d="M805,24.6h4.4v-2.2l3.6,4.6l-3.6,4.6v-2.2h-4.4z" fill="#2a2a2a"/>
<g filter="url(#sh)" stroke="#222" stroke-width="1" stroke-linejoin="round">
<path d="M835.5,22.5L842.2,15.4H853L845.5,21.6Z" fill="#f4f5f8"/>
<path d="M835.5,22.5H846C852,24 855,28 855.9,33.8V42.4H835.5Z" fill="url(#gG2)"/>
<path d="M855.9,33.8L862.5,27.5V35.4L855.9,42.4Z" fill="#9ea5b4"/>
<path d="M845.3,21.7L852,15.4C858,15.4 862.5,20 862.5,27.5L855.9,33.8C855,28 852,23.5 845.3,21.7Z" fill="url(#gB)" stroke="#24365e"/>
</g>
<g filter="url(#sh)" stroke="#222" stroke-width="1" stroke-linejoin="round">
<path d="M887.5,24.8L898.4,13.5H908.6L916.4,21.7V42.4H895.3L887.5,34.6Z" fill="url(#gG2)"/>
<path d="M898.4,13.5H908.6L916.4,21.7H907Z" fill="#f4f5f8"/>
<path d="M887.5,24.8L895.3,33V42.4L887.5,34.6Z" fill="#e6e8ee"/>
<path d="M887.5,24.8L898.4,13.5L907,21.7L895.3,33Z" fill="url(#gB)" stroke="#24365e"/>
</g>
<g filter="url(#sh)"><circle cx="954" cy="29" r="13.8" fill="#7fa8de"/>
<path d="M951,15.6C949,21 950,26 953.6,29.6C958,26 964,24.6 967.4,25.4C966,19 960,14.8 951,15.6Z" fill="#d37a8a"/>
<path d="M953.6,29.6C958,26 964,24.6 967.4,25.4C969,33 964,41 955,42.7C951,42.9 950.2,42.6 949.4,42C950,37 951,33 953.6,29.6Z" fill="#f2d03c"/>
<circle cx="954" cy="29" r="13.8" fill="url(#gSph)" stroke="#9a9a9a" stroke-width="0.9"/></g>
<g filter="url(#sh)" stroke-linejoin="round" stroke-width="1">
<path d="M997.2,30.7H1009.3V42.4H997.2Z" fill="#cdd1db" stroke="#222"/>
<path d="M1009.3,30.7H1021.5V42.4H1009.3Z" fill="#cdd1db" stroke="#222"/><path d="M1009.3,30.7L1013.6,26.6H1025.7L1021.5,30.7Z" fill="#f0f1f4" stroke="#222"/><path d="M1021.5,30.7L1025.7,26.6V38.2L1021.5,42.4Z" fill="#a4abba" stroke="#222"/>
<path d="M997.2,18.8H1009.3V30.7H997.2Z" fill="url(#gB)" stroke="#24365e"/><path d="M997.2,18.8L1001.4,14.6H1013.6L1009.3,18.8Z" fill="url(#gBl)" stroke="#24365e"/><path d="M1009.3,18.8L1013.6,14.6V26.6L1009.3,30.7Z" fill="url(#gBd)" stroke="#24365e"/>
<path d="M1000.3,13.4h3.2v3.9h3.9v3.2h-3.9v3.9h-3.2v-3.9h-3.9v-3.2h3.9z" fill="#fff" stroke="#2a2a2a" stroke-width="1"/>
</g>
<defs><linearGradient id="gJ" x1="0" y1="0" x2="1" y2="0"><stop offset="0" stop-color="#fbfbfc"/><stop offset="1" stop-color="#9ea3af"/></linearGradient></defs>
<g filter="url(#sh)" stroke="#3c3c3c" stroke-width="0.9" stroke-linejoin="round">
<path d="M1050.4,24.4L1057.8,17.4V33.8L1050.4,40.4Z" fill="url(#gJ)"/><path d="M1050.4,24.4L1052.6,23V38.4L1050.4,40.4Z" fill="#f6f6f8"/>
<path d="M1056.2,17C1056.2,14.6 1062.5,14.6 1062.5,17V25.6C1062.5,28 1056.2,28 1056.2,25.6Z" fill="url(#gJ)"/><ellipse cx="1059.35" cy="17" rx="3.15" ry="1.7" fill="#fff"/><circle cx="1059.35" cy="17" r="0.75" fill="#222" stroke="none"/>
<path d="M1069.9,19.7L1077.3,26.4V41.6L1069.9,35Z" fill="url(#gJ)"/><path d="M1075.2,24.5L1077.3,26.4V41.6L1075.2,39.7Z" fill="#a9aeb9"/>
<path d="M1064.4,26.6C1064.4,24.2 1069.6,24.2 1069.6,26.6V34.4C1069.6,36.8 1064.4,36.8 1064.4,34.4Z" fill="url(#gJ)"/><ellipse cx="1067" cy="26.6" rx="2.6" ry="1.5" fill="#fff"/>
</g>
<path d="M1059.4,28.4V33.8M1067.2,21V26.2" stroke="#ff7a1a" stroke-width="1.3"/>
<g filter="url(#sh)" stroke-linejoin="round" stroke-width="1">
<path d="M1134.4,21.3L1141.4,14.3H1152L1144.2,21.3Z" fill="#f4f5f8" stroke="#222"/>
<rect x="1134.4" y="21.3" width="9.8" height="21.1" fill="url(#gG)" stroke="#222"/>
<path d="M1144.2,21.3L1152,14.3V35.4L1144.2,42.4Z" fill="#5b9649" stroke="#2c5a22"/>
<path d="M1155.3,22.5L1163.8,14.3V34.6L1155.3,42.8Z" fill="#e8965c" stroke="#7a3010"/>
</g>
<rect x="1243.9" y="14.1" width="29.9" height="29.8" fill="#fbd7b0"/><path d="M1243.9,31C1253,33.5 1266,33 1273.8,35V43.9H1243.9Z" fill="#fde7d0"/><path d="M1262,14.1H1273.8V32Z" fill="#fce0c2"/>
<text x="1249.4" y="39.9" font-family="Liberation Sans, sans-serif" font-weight="bold" font-size="31" textLength="19.6" lengthAdjust="spacingAndGlyphs" fill="#d88522" stroke="#b9650f" stroke-width="0.5">G</text>
<path d="M1343.5,23.5H1371.6M1343.5,21.2V25.8M1371.6,21.2V25.8" stroke="#3a3a3a" stroke-width="1.2" fill="none"/>
<rect filter="url(#sh)" x="1343.3" y="31.4" width="28.5" height="5.4" rx="0.8" fill="url(#gY)" stroke="#9c560e" stroke-width="0.9"/>
<path d="M1346,32v1.4M1349,32v1.4M1352,32v1.4M1355,32v1.4M1358,32v1.4M1361,32v1.4M1364,32v1.4M1367,32v1.4M1370,32v1.4" stroke="#9c560e" stroke-width="0.8"/>
<g filter="url(#sh)"><rect x="1431.6" y="13.4" width="29.2" height="29" rx="1.5" fill="url(#gSky)" stroke="#3a3a3a" stroke-width="1.4"/>
<path d="M1447,30C1449,27 1451,28 1453,29L1460,34V41.6H1447Z" fill="#aab6c4"/>
<path d="M1432.4,32C1435,29 1438,26 1440.4,27.2C1444,28 1452,36 1459.4,41.6H1432.4Z" fill="#8c94a6"/>
<path d="M1432.4,32C1435,29 1438,26 1440.4,27.2C1442,30 1444,33 1442.4,37C1444,39 1446,40.6 1448,41.6H1432.4Z" fill="#5f6676"/>
<path d="M1441,27.4C1446,29 1453,37 1459.6,41.4" fill="none" stroke="#fbf2d8" stroke-width="0.8"/>
<circle cx="1452" cy="21" r="3.4" fill="#fbe9a8"/><circle cx="1452" cy="21" r="2.3" fill="#fff"/>
<rect x="1431.6" y="13.4" width="29.2" height="29" rx="1.5" fill="none" stroke="#3a3a3a" stroke-width="1.4"/></g>
<g filter="url(#sh)"><path d="M1509.3,19L1512,15.2H1536.4L1539,19V40.6Q1539,42.6 1537,42.6H1511.3Q1509.3,42.6 1509.3,40.6Z" fill="url(#gPr)" stroke="#444" stroke-width="1"/>
<rect x="1512" y="25.2" width="24.2" height="14.4" rx="1.4" fill="#8a8a8c" stroke="#4a4a4a" stroke-width="0.9"/><rect x="1514" y="27" width="20.2" height="10.8" fill="#5e5e62"/>
<path d="M1518.6,30.6H1529.8L1533,36.6H1515.4Z" fill="#f4f4f4"/><path d="M1520.4,25.6H1524.8V30.6L1522.6,33L1520.4,30.6Z" fill="#5a8ad8" stroke="#1a3f90" stroke-width="0.6"/>
<rect x="1533" y="22" width="1.8" height="1.8" fill="#1c8a1c"/></g>
<g filter="url(#sh)"><rect x="1591.2" y="15.2" width="23.6" height="21.4" rx="0.8" fill="url(#gG2)" stroke="#444" stroke-width="1"/><rect x="1591.7" y="15.7" width="22.6" height="4.4" fill="#8b91a2"/><path d="M1591.2,20.4H1614.8" stroke="#444" stroke-width="0.8"/>
<path d="M1595,24.4L1598,26.4L1595,28.4M1599.6,26.4H1603.6" fill="none" stroke="#2a2a2a" stroke-width="0.9"/></g>
<path d="M1620.6,36.7L1620.3,38.1L1618.3,38.4L1617.8,39.3L1618.2,41.2L1617.0,42.0L1615.5,40.8L1614.4,41.0L1613.4,42.7L1612.0,42.4L1611.7,40.4L1610.8,39.9L1608.9,40.3L1608.1,39.1L1609.3,37.6L1609.1,36.5L1607.4,35.5L1607.7,34.1L1609.7,33.8L1610.2,32.9L1609.8,31.0L1611.0,30.2L1612.5,31.4L1613.6,31.2L1614.6,29.5L1616.0,29.8L1616.3,31.8L1617.2,32.3L1619.1,31.9L1619.9,33.1L1618.7,34.6L1618.9,35.7Z" fill="#c6d4ee" stroke="#2f4f9f" stroke-width="1.15" stroke-linejoin="round"/>
<circle cx="1614.0" cy="36.1" r="2.2" fill="#fff" stroke="#3a5aa8" stroke-width="0.8"/>
<rect x="1679.4" y="13.5" width="20.5" height="14.2" fill="none" stroke="#5daa0a" stroke-width="1.5"/>
<path filter="url(#sh)" d="M1699.6,27.8L1699.6,40.4L1702.6,37.8L1704.8,42.6L1706.8,41.6L1704.6,37L1708.4,36.6Z" fill="#e8eaf0" stroke="#333" stroke-width="0.9" stroke-linejoin="round"/>
</svg>
</div>
<div class="panel" style="left:4px;top:83px;width:300px;height:25px;"><svg class="ico" style="left:5px;top:8.5px" width="11" height="7" viewBox="0 0 11 7"><path d="M5,0V7L0,3.5ZM10.5,0V7L5.5,3.5Z" fill="#222"/></svg><span style="left:24.3px;top:3.6px">BROWSER</span><svg class="ico" style="left:277.5px;top:6.8px" width="10" height="10" viewBox="0 0 10 10"><circle cx="5" cy="5" r="4.7" fill="#1c1c1c"/><rect x="2.2" y="4.2" width="5.6" height="1.6" fill="#fff"/></svg><div style="position:absolute;left:294.4px;top:6px;width:1px;height:12px;background:#666"></div><div style="position:absolute;left:296.6px;top:8px;width:1px;height:8px;background:#999"></div></div>
<div class="row" style="left:40.9px;top:113.2px;width:168.9px"><div style="position:absolute;left:26px;top:2.1px;width:117px;height:20.6px;background:#9b9b9b"></div><span style="left:62.5px;color:#fff;font-weight:bold">Untitled v1</span></div>
<svg class="ico" style="left:22.6px;top:119.2px" width="12" height="12" viewBox="0 0 12 12"><defs><linearGradient id="gt119" x1="0" y1="0" x2="1" y2="1"><stop offset="0.4" stop-color="#e8e8e8"/><stop offset="1" stop-color="#555"/></linearGradient></defs><path d="M11,0.8V11H0.8Z" fill="url(#gt119)" stroke="#333" stroke-width="1" stroke-linejoin="round"/></svg>
<svg class="ico" style="left:48.2px;top:118.2px" width="11" height="15" viewBox="0 0 10.4 14.6"><g><path d="M5.2,0.6C2.4,0.6 0.6,2.7 0.6,5C0.6,7 2,8 2.8,9.6C3.1,10.2 3.2,10.8 3.2,11.2H7.2C7.2,10.8 7.3,10.2 7.6,9.6C8.4,8 9.8,7 9.8,5C9.8,2.7 8,0.6 5.2,0.6Z" fill="#f7dc3c" stroke="#a88a10" stroke-width="0.8"/><ellipse cx="3.9" cy="3.6" rx="1.7" ry="2" fill="#fff" fill-opacity="0.75"/><path d="M3.3,11.4H7.1V13.4C7.1,14.3 3.3,14.3 3.3,13.4Z" fill="#8a8e96" stroke="#50545c" stroke-width="0.6"/><path d="M3.4,12.5H7" stroke="#dfe2e8" stroke-width="0.6"/></g></svg>
<svg class="ico" style="left:72px;top:117.4px" width="17" height="16" viewBox="0 0 17 16"><path d="M0.8,4.6L4,0.8H15.6V11.4L12.4,15.2H0.8Z" fill="#e9ebf0" stroke="#3a3a3a" stroke-width="1" stroke-linejoin="round"/><path d="M0.8,4.6H12.4V15.2M12.4,4.6L15.6,0.8" fill="none" stroke="#3a3a3a" stroke-width="0.9"/><path d="M1.3,5.1H11.9V14.7H1.3Z" fill="#fbfbfc"/></svg>
<svg class="ico" style="left:189.6px;top:118.6px" width="14" height="14" viewBox="0 0 14 14"><circle cx="7" cy="7" r="6" fill="#fff" stroke="#222" stroke-width="1.1"/><circle cx="7" cy="7" r="2.4" fill="#222"/></svg>
<div class="row" style="left:59.1px;top:142.2px;width:161.8px"><span style="left:36.3px">Document Settings</span></div>
<svg class="ico" style="left:41.4px;top:148.1px" width="10" height="13" viewBox="0 0 10 13"><path d="M0.8,0.9L9,6.5L0.8,12.1Z" fill="#f4f4f4" stroke="#333" stroke-width="1.2" stroke-linejoin="round"/></svg>
<svg class="ico" style="left:63.8px;top:146.4px" width="16" height="16" viewBox="0 0 16 16"><path fill-rule="evenodd" d="M15.7,8.6L15.3,10.4L13.0,10.5L12.3,11.6L13.0,13.8L11.5,14.9L9.7,13.3L8.4,13.6L7.4,15.7L5.6,15.3L5.5,13.0L4.4,12.3L2.2,13.0L1.1,11.5L2.7,9.7L2.4,8.4L0.3,7.4L0.7,5.6L3.0,5.5L3.7,4.4L3.0,2.2L4.5,1.1L6.3,2.7L7.6,2.4L8.6,0.3L10.4,0.7L10.5,3.0L11.6,3.7L13.8,3.0L14.9,4.5L13.3,6.3L13.6,7.6Z M8,4.9A3.1,3.1 0 1 0 8,11.1A3.1,3.1 0 1 0 8,4.9Z" fill="#4a4a4a"/><circle cx="8" cy="8" r="1.5" fill="#4a4a4a"/></svg>
<div class="row" style="left:59.1px;top:171.2px;width:131.6px"><span style="left:36.3px;letter-spacing:-0.18px">Named Views</span></div>
<svg class="ico" style="left:41.4px;top:177.1px" width="10" height="13" viewBox="0 0 10 13"><path d="M0.8,0.9L9,6.5L0.8,12.1Z" fill="#f4f4f4" stroke="#333" stroke-width="1.2" stroke-linejoin="round"/></svg>
<svg class="ico" style="left:63.6px;top:177.3px" width="16" height="13" viewBox="0 0 16 13"><path d="M0.6,2.6V11.6Q0.6,12.4 1.4,12.4H14.4Q15.2,12.4 15.2,11.6V3.4Q15.2,2.6 14.4,2.6H7.2L6.4,0.6H1.4Q0.6,0.6 0.6,1.4Z" fill="#f6f6f6" stroke="#444" stroke-width="1"/><path d="M0.6,3H7.2" stroke="#444" stroke-width="0.8"/></svg>
<div class="row" style="left:59.1px;top:200.2px;width:107.8px"><span style="left:62.2px;letter-spacing:-0.22px">Origin</span></div>
<svg class="ico" style="left:41.4px;top:206.1px" width="10" height="13" viewBox="0 0 10 13"><path d="M0.8,0.9L9,6.5L0.8,12.1Z" fill="#f4f4f4" stroke="#333" stroke-width="1.2" stroke-linejoin="round"/></svg>
<svg class="ico" style="left:65.8px;top:205.2px" width="11" height="15" viewBox="0 0 10.4 14.6"><g><path d="M5.2,0.6C2.4,0.6 0.6,2.7 0.6,5C0.6,7 2,8 2.8,9.6C3.1,10.2 3.2,10.8 3.2,11.2H7.2C7.2,10.8 7.3,10.2 7.6,9.6C8.4,8 9.8,7 9.8,5C9.8,2.7 8,0.6 5.2,0.6Z" fill="#c8d6f6" stroke="#6c82c4" stroke-width="0.8"/><ellipse cx="3.9" cy="3.6" rx="1.7" ry="2" fill="#fff" fill-opacity="0.75"/><path d="M3.3,11.4H7.1V13.4C7.1,14.3 3.3,14.3 3.3,13.4Z" fill="#8a8e96" stroke="#50545c" stroke-width="0.6"/><path d="M3.4,12.5H7" stroke="#dfe2e8" stroke-width="0.6"/></g></svg>
<svg class="ico" style="left:89.7px;top:206.3px" width="16" height="13" viewBox="0 0 16 13"><path d="M0.6,2.6V11.6Q0.6,12.4 1.4,12.4H14.4Q15.2,12.4 15.2,11.6V3.4Q15.2,2.6 14.4,2.6H7.2L6.4,0.6H1.4Q0.6,0.6 0.6,1.4Z" fill="#f6f6f6" stroke="#444" stroke-width="1"/><path d="M0.6,3H7.2" stroke="#444" stroke-width="0.8"/></svg>
<div class="row" style="left:59.1px;top:229.2px;width:117.7px"><span style="left:62.2px;letter-spacing:-0.16px">Bodies</span></div>
<svg class="ico" style="left:40.6px;top:235.2px" width="12" height="12" viewBox="0 0 12 12"><defs><linearGradient id="gt235" x1="0" y1="0" x2="1" y2="1"><stop offset="0.4" stop-color="#e8e8e8"/><stop offset="1" stop-color="#555"/></linearGradient></defs><path d="M11,0.8V11H0.8Z" fill="url(#gt235)" stroke="#333" stroke-width="1" stroke-linejoin="round"/></svg>
<svg class="ico" style="left:65.8px;top:234.2px" width="11" height="15" viewBox="0 0 10.4 14.6"><g><path d="M5.2,0.6C2.4,0.6 0.6,2.7 0.6,5C0.6,7 2,8 2.8,9.6C3.1,10.2 3.2,10.8 3.2,11.2H7.2C7.2,10.8 7.3,10.2 7.6,9.6C8.4,8 9.8,7 9.8,5C9.8,2.7 8,0.6 5.2,0.6Z" fill="#f7dc3c" stroke="#a88a10" stroke-width="0.8"/><ellipse cx="3.9" cy="3.6" rx="1.7" ry="2" fill="#fff" fill-opacity="0.75"/><path d="M3.3,11.4H7.1V13.4C7.1,14.3 3.3,14.3 3.3,13.4Z" fill="#8a8e96" stroke="#50545c" stroke-width="0.6"/><path d="M3.4,12.5H7" stroke="#dfe2e8" stroke-width="0.6"/></g></svg>
<svg class="ico" style="left:89.7px;top:235.3px" width="16" height="13" viewBox="0 0 16 13"><path d="M0.6,2.6V11.6Q0.6,12.4 1.4,12.4H14.4Q15.2,12.4 15.2,11.6V3.4Q15.2,2.6 14.4,2.6H7.2L6.4,0.6H1.4Q0.6,0.6 0.6,1.4Z" fill="#f6f6f6" stroke="#444" stroke-width="1"/><path d="M0.6,3H7.2" stroke="#444" stroke-width="0.8"/></svg>
<div class="row" style="left:76.1px;top:258.2px;width:112.6px"><span style="left:62.2px;letter-spacing:-0.1px">Body1</span></div>
<svg class="ico" style="left:83.2px;top:263.2px" width="11" height="15" viewBox="0 0 10.4 14.6"><g><path d="M5.2,0.6C2.4,0.6 0.6,2.7 0.6,5C0.6,7 2,8 2.8,9.6C3.1,10.2 3.2,10.8 3.2,11.2H7.2C7.2,10.8 7.3,10.2 7.6,9.6C8.4,8 9.8,7 9.8,5C9.8,2.7 8,0.6 5.2,0.6Z" fill="#f7dc3c" stroke="#a88a10" stroke-width="0.8"/><ellipse cx="3.9" cy="3.6" rx="1.7" ry="2" fill="#fff" fill-opacity="0.75"/><path d="M3.3,11.4H7.1V13.4C7.1,14.3 3.3,14.3 3.3,13.4Z" fill="#8a8e96" stroke="#50545c" stroke-width="0.6"/><path d="M3.4,12.5H7" stroke="#dfe2e8" stroke-width="0.6"/></g></svg>
<svg class="ico" style="left:106.7px;top:262.2px" width="17" height="16" viewBox="0 0 17 16"><defs><linearGradient id="gb262" x1="0" y1="0" x2="1" y2="0"><stop offset="0" stop-color="#fff"/><stop offset="1" stop-color="#a8adb8"/></linearGradient></defs><path d="M0.7,3.4C0.7,0 15.7,0 15.7,3.4V12.4C15.7,16 0.7,16 0.7,12.4Z" fill="#fdfdfd" stroke="#333" stroke-width="1"/><path d="M4.4,6.4H12.6V13.6C10,14.6 7,14.6 4.4,13.6Z" fill="url(#gb262)"/></svg>
<div class="row" style="left:76.1px;top:287.2px;width:112.6px"><span style="left:62.2px;letter-spacing:-0.1px">Body2</span></div>
<svg class="ico" style="left:83.2px;top:292.2px" width="11" height="15" viewBox="0 0 10.4 14.6"><g><path d="M5.2,0.6C2.4,0.6 0.6,2.7 0.6,5C0.6,7 2,8 2.8,9.6C3.1,10.2 3.2,10.8 3.2,11.2H7.2C7.2,10.8 7.3,10.2 7.6,9.6C8.4,8 9.8,7 9.8,5C9.8,2.7 8,0.6 5.2,0.6Z" fill="#c8d6f6" stroke="#6c82c4" stroke-width="0.8"/><ellipse cx="3.9" cy="3.6" rx="1.7" ry="2" fill="#fff" fill-opacity="0.75"/><path d="M3.3,11.4H7.1V13.4C7.1,14.3 3.3,14.3 3.3,13.4Z" fill="#8a8e96" stroke="#50545c" stroke-width="0.6"/><path d="M3.4,12.5H7" stroke="#dfe2e8" stroke-width="0.6"/></g></svg>
<svg class="ico" style="left:106.7px;top:291.2px" width="17" height="16" viewBox="0 0 17 16"><defs><linearGradient id="gb291" x1="0" y1="0" x2="1" y2="0"><stop offset="0" stop-color="#fff"/><stop offset="1" stop-color="#a8adb8"/></linearGradient></defs><path d="M0.7,3.4C0.7,0 15.7,0 15.7,3.4V12.4C15.7,16 0.7,16 0.7,12.4Z" fill="#fdfdfd" stroke="#333" stroke-width="1"/><path d="M4.4,6.4H12.6V13.6C10,14.6 7,14.6 4.4,13.6Z" fill="url(#gb291)"/></svg>
<div class="row" style="left:59.1px;top:316.2px;width:132.9px"><span style="left:62.2px">Sketches</span></div>
<svg class="ico" style="left:41.4px;top:322.1px" width="10" height="13" viewBox="0 0 10 13"><path d="M0.8,0.9L9,6.5L0.8,12.1Z" fill="#f4f4f4" stroke="#333" stroke-width="1.2" stroke-linejoin="round"/></svg>
<svg class="ico" style="left:65.8px;top:321.2px" width="11" height="15" viewBox="0 0 10.4 14.6"><g><path d="M5.2,0.6C2.4,0.6 0.6,2.7 0.6,5C0.6,7 2,8 2.8,9.6C3.1,10.2 3.2,10.8 3.2,11.2H7.2C7.2,10.8 7.3,10.2 7.6,9.6C8.4,8 9.8,7 9.8,5C9.8,2.7 8,0.6 5.2,0.6Z" fill="#f7dc3c" stroke="#a88a10" stroke-width="0.8"/><ellipse cx="3.9" cy="3.6" rx="1.7" ry="2" fill="#fff" fill-opacity="0.75"/><path d="M3.3,11.4H7.1V13.4C7.1,14.3 3.3,14.3 3.3,13.4Z" fill="#8a8e96" stroke="#50545c" stroke-width="0.6"/><path d="M3.4,12.5H7" stroke="#dfe2e8" stroke-width="0.6"/></g></svg>
<svg class="ico" style="left:89.7px;top:322.3px" width="16" height="13" viewBox="0 0 16 13"><path d="M0.6,2.6V11.6Q0.6,12.4 1.4,12.4H14.4Q15.2,12.4 15.2,11.6V3.4Q15.2,2.6 14.4,2.6H7.2L6.4,0.6H1.4Q0.6,0.6 0.6,1.4Z" fill="#f6f6f6" stroke="#444" stroke-width="1"/><path d="M0.6,3H7.2" stroke="#444" stroke-width="0.8"/></svg>
<div class="row" style="left:59.1px;top:345.2px;width:147.9px"><span style="left:62.2px">Construction</span></div>
<svg class="ico" style="left:41.4px;top:351.1px" width="10" height="13" viewBox="0 0 10 13"><path d="M0.8,0.9L9,6.5L0.8,12.1Z" fill="#f4f4f4" stroke="#333" stroke-width="1.2" stroke-linejoin="round"/></svg>
<svg class="ico" style="left:65.8px;top:350.2px" width="11" height="15" viewBox="0 0 10.4 14.6"><g><path d="M5.2,0.6C2.4,0.6 0.6,2.7 0.6,5C0.6,7 2,8 2.8,9.6C3.1,10.2 3.2,10.8 3.2,11.2H7.2C7.2,10.8 7.3,10.2 7.6,9.6C8.4,8 9.8,7 9.8,5C9.8,2.7 8,0.6 5.2,0.6Z" fill="#f7dc3c" stroke="#a88a10" stroke-width="0.8"/><ellipse cx="3.9" cy="3.6" rx="1.7" ry="2" fill="#fff" fill-opacity="0.75"/><path d="M3.3,11.4H7.1V13.4C7.1,14.3 3.3,14.3 3.3,13.4Z" fill="#8a8e96" stroke="#50545c" stroke-width="0.6"/><path d="M3.4,12.5H7" stroke="#dfe2e8" stroke-width="0.6"/></g></svg>
<svg class="ico" style="left:89.7px;top:351.3px" width="16" height="13" viewBox="0 0 16 13"><path d="M0.6,2.6V11.6Q0.6,12.4 1.4,12.4H14.4Q15.2,12.4 15.2,11.6V3.4Q15.2,2.6 14.4,2.6H7.2L6.4,0.6H1.4Q0.6,0.6 0.6,1.4Z" fill="#f6f6f6" stroke="#444" stroke-width="1"/><path d="M0.6,3H7.2" stroke="#444" stroke-width="0.8"/></svg>
<div class="panel" style="left:4px;top:852px;width:300px;height:25px;border-top-color:#e4e4e4"><span style="left:24.3px;top:3.6px;letter-spacing:-0.14px">COMMENTS</span><svg class="ico" style="left:277.5px;top:6.8px" width="10" height="10" viewBox="0 0 10 10"><circle cx="5" cy="5" r="4.7" fill="#1c1c1c"/><rect x="2.2" y="4.2" width="5.6" height="1.6" fill="#fff"/><rect x="4.2" y="2.2" width="1.6" height="5.6" fill="#fff"/></svg><div style="position:absolute;left:294.4px;top:6px;width:1px;height:12px;background:#666"></div><div style="position:absolute;left:296.6px;top:8px;width:1px;height:8px;background:#999"></div></div>
<div class="panel" style="left:1551px;top:138px;width:372px;height:25px;"><svg class="ico" style="left:5.5px;top:6.8px" width="10" height="10" viewBox="0 0 10 10"><circle cx="5" cy="5" r="4.7" fill="#1c1c1c"/><rect x="2.2" y="4.2" width="5.6" height="1.6" fill="#fff"/><rect x="4.2" y="2.2" width="1.6" height="5.6" fill="#fff"/></svg><span style="left:24.3px;top:3.6px;letter-spacing:-0.14px">PHYSICAL MATERIAL</span></div>
<div class="nav"><svg class="ico" style="left:-822.5px;top:-846.7px" width="1920" height="881" viewBox="0 0 1920 881"><ellipse cx="835" cy="861.3" rx="3.4" ry="7.6" fill="none" stroke="#3a3a3a" stroke-width="1"/><path d="M828.6,858.8C826.4,860.6 826.6,863 829.4,864.2M840.8,858.8C843.6,860.4 843.2,863.4 839.6,864.6" fill="none" stroke="#3a3a3a" stroke-width="1"/><path d="M838.6,857.4l2.6,1.2l-2,1.8z" fill="#3a3a3a"/><path d="M834.2,859.6v3.4M832.5,861.3h3.4" stroke="#2a7ae0" stroke-width="1.2"/><path d="M850.0,859.2h6.6l-3.3,4.6z" fill="#222"/><rect x="865.4" y="859.6" width="15.4" height="9.6" fill="#f4f4f4" stroke="#3a3a3a" stroke-width="1"/><rect x="868" y="862.4" width="10" height="4" fill="#9aa0ae" stroke="#3a3a3a" stroke-width="0.8"/><path d="M866.5,859.4l2.6,-3l2,2l2.6,-2.6l2.4,2l2,-2.4v4z" fill="#bbb" stroke="#3a3a3a" stroke-width="0.8"/><path d="M894,869.4C892.4,866.6 891.6,864.6 891.4,862.6C891.4,861.4 892.8,861.4 893.4,862.6L894.2,864V857.6C894.2,856.4 895.8,856.4 895.9,857.6V855.8C895.9,854.6 897.6,854.6 897.7,855.8V855.4C897.7,854.4 899.4,854.4 899.5,855.6V857C899.6,856 901.2,856 901.2,857.2V861.4L902.6,859.4C903.4,858.4 904.6,859 904.2,860.2C903.4,863 902.6,866 901,869.4Z" fill="#fafafa" stroke="#2a2a2a" stroke-width="0.9" stroke-linejoin="round"/><path d="M895.9,857.6V862.4M897.7,856V862.2M899.5,857V862.4" stroke="#2a2a2a" stroke-width="0.7"/><circle cx="922.6" cy="860.8" r="4.9" fill="#e8eef6" stroke="#3a3a3a" stroke-width="1.2"/><path d="M926.2,864.6L930.4,869" stroke="#2a2a2a" stroke-width="2.2" stroke-linecap="round"/><path d="M929,857.2h4M931,855.2v4M929,861h4" stroke="#2a2a2a" stroke-width="0.9"/><circle cx="949.6" cy="860.2" r="6.4" fill="#e4e6ea" stroke="#3a3a3a" stroke-width="1.3"/><rect x="946.4" y="857.2" width="6.2" height="6" fill="#fafafa" stroke="#3a3a3a" stroke-width="0.9"/><path d="M954.2,865L958.4,869.4" stroke="#2a2a2a" stroke-width="2.4" stroke-linecap="round"/><path d="M965.8,859.2h6.6l-3.3,4.6z" fill="#222"/><rect x="989.6" y="855" width="14.6" height="11" rx="1" fill="#f2f2f2" stroke="#4a4a4a" stroke-width="1.1"/><rect x="991.6" y="856.9" width="10.6" height="7.2" fill="#8eb0dc" stroke="#4a6a9a" stroke-width="0.6"/><path d="M995,866.6h3.8l0.8,2h-5.4z" fill="#ddd" stroke="#666" stroke-width="0.5"/><path d="M992.6,869h8.6" stroke="#bbb" stroke-width="1"/><path d="M1009.0,859.2h6.6l-3.3,4.6z" fill="#222"/><rect x="1028" y="854.8" width="14.4" height="14.4" fill="#f8f8f8" stroke="#555" stroke-width="1"/><path d="M1031.6,854.8v14.4M1035.2,854.8v14.4M1038.8,854.8v14.4M1028,858.4h14.4M1028,862h14.4M1028,865.6h14.4" stroke="#666a76" stroke-width="0.9"/><path d="M1047.2,859.2h6.6l-3.3,4.6z" fill="#222"/><rect x="1065.6" y="855.2" width="14.2" height="12.4" rx="1" fill="#35508c"/><rect x="1067" y="856.6" width="5" height="4.2" fill="#a9c3e6"/><rect x="1073.4" y="856.6" width="5" height="4.2" fill="#a9c3e6"/><rect x="1067" y="862.2" width="5" height="4.2" fill="#a9c3e6"/><rect x="1073.4" y="862.2" width="5" height="4.2" fill="#a9c3e6"/><path d="M1085.0,859.2h6.6l-3.3,4.6z" fill="#222"/></svg></div>
<div class="botline"></div>
</body></html>
